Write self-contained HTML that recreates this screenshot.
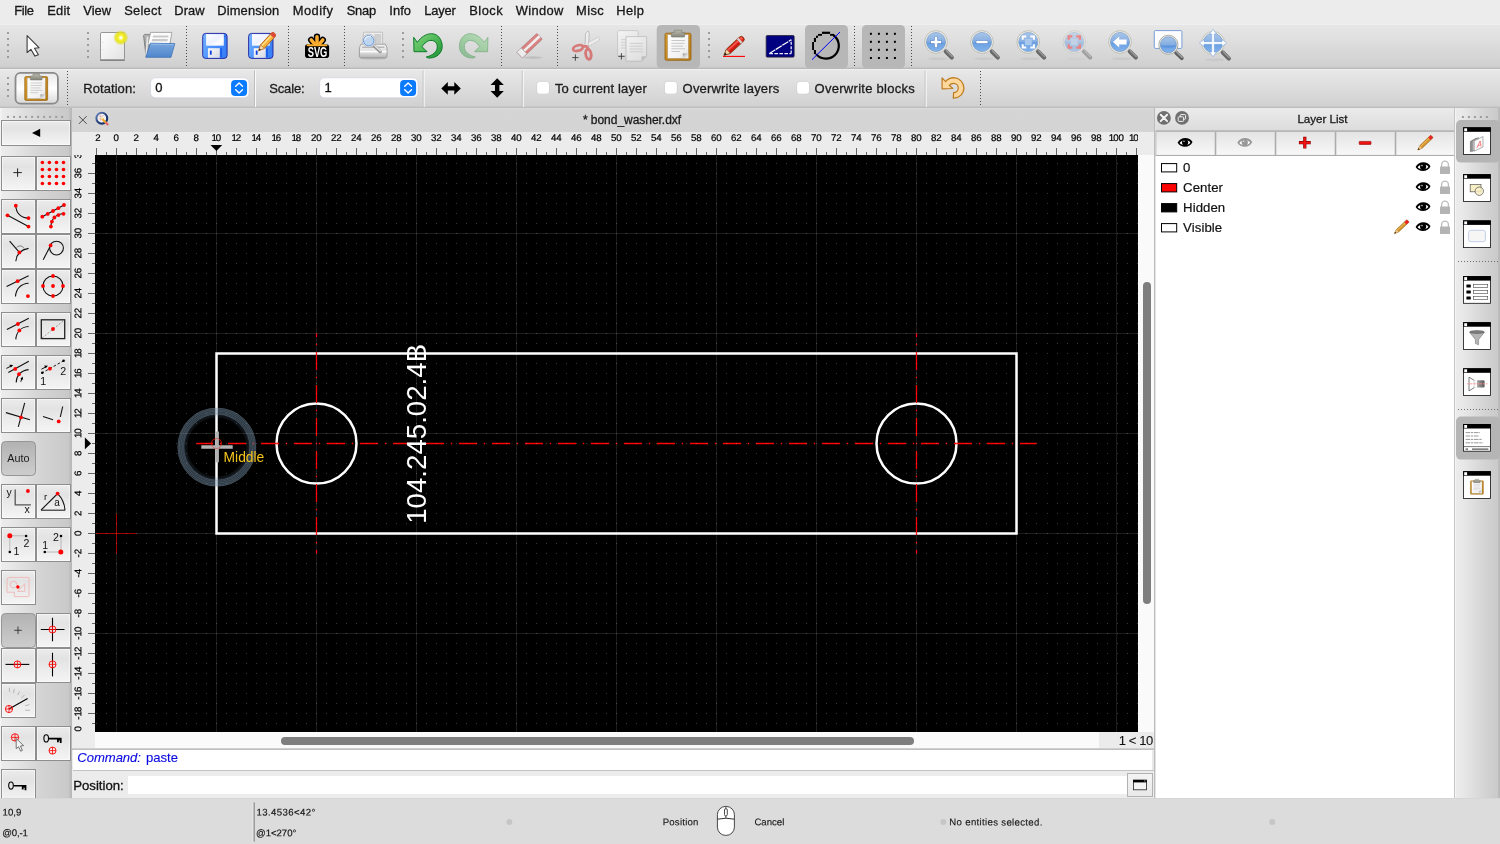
<!DOCTYPE html>
<html lang="en"><head><meta charset="utf-8"><title>bond_washer.dxf</title>
<style>
html,body{margin:0;padding:0}
body{width:1500px;height:844px;position:relative;overflow:hidden;background:#ececec;font-family:"Liberation Sans",sans-serif;font-size:13px;color:#000;line-height:1}
#app{position:absolute;left:0;top:0;width:1500px;height:844px;overflow:hidden;will-change:transform}
.abs{position:absolute}
.abs svg{display:block}
svg{display:block;overflow:visible}
#menubar{left:0;top:0;width:1500px;height:24px;background:#ececec}
#toolbar{left:0;top:24px;width:1500px;height:44px;background:linear-gradient(#f4f4f4,#e6e6e6 1.5px,#e5e5e5 10%,#d0d0d0 96%,#c4c4c4);border-bottom:1px solid #b9b9b9}
#options{left:0;top:69px;width:1500px;height:39px;background:linear-gradient(#f4f4f4,#e8e8e8 1.5px,#e6e6e6 10%,#d1d1d1 95%,#bfbfbf 97.5%,#bcbcbc)}
#leftbar{left:0;top:108px;width:72px;height:690px;background:linear-gradient(90deg,#f6f6f6,#ececec 3%,#e8e8e8 15%,#d4d4d4 56%,#c9c9c9 95%,#bcbcbc 97.5%,#b6b6b6)}
#tabbar{left:72px;top:108px;width:1082px;height:24px;background:linear-gradient(#dedede,#d5d5d5 1.5px,#d4d4d4)}
#corner{left:72px;top:132px;width:23px;height:23px;background:#ececec}
#vscroll{left:1138px;top:155px;width:16px;height:577px;background:#fafafa}
#vscroll i{position:absolute;left:5px;top:127px;width:8px;height:322px;border-radius:4px;background:#7e7e7e}
#hscroll{left:95px;top:732px;width:1004px;height:16px;background:#fafafa}
#hscroll i{position:absolute;left:185.7px;top:5px;width:633.3px;height:8px;border-radius:4px;background:#7e7e7e}
#zoomlbl{left:1099px;top:732px;width:55px;height:16px;background:#ebebeb}
#cmdsep{left:72px;top:748px;width:1082px;height:2.3px;background:linear-gradient(#f0f0f0,#c9c9c9 30%,#bebebe 75%,#d6d6d6)}
#cmd{left:73px;top:750.3px;width:1081px;height:19.7px;background:#fff;border-bottom:1.2px solid #c2c2c2}
#posrow{left:72px;top:771.2px;width:1082px;height:26.8px;background:#ececec}
#posrow .inp{position:absolute;left:56px;top:4.8px;width:998.6px;height:18px;background:#fff}
#posrow .btn{position:absolute;left:1055.3px;top:1.5px;width:25.4px;height:24.6px;border:1px solid #b2b2b2;background:linear-gradient(#f4f4f4,#e9e9e9);box-sizing:border-box}
#status{left:0;top:797.6px;width:1500px;height:47px;background:linear-gradient(#d3d3d3,#dcdcdc 1.5px,#dcdcdc)}
#corner2{left:72px;top:732px;width:23px;height:16px;background:#ececec}
#corner3{left:1138px;top:132px;width:16px;height:23px;background:#ececec}

</style></head>
<body>
<div id="app">
<div id="menubar" class="abs">
</div>
<div id="toolbar" class="abs"></div>
<div id="options" class="abs"></div>
<div id="leftbar" class="abs"></div>
<div id="tabbar" class="abs"></div>
<div id="corner" class="abs"></div>
<div id="corner2" class="abs"></div>
<div id="corner3" class="abs"></div>
<div id="vscroll" class="abs"><i></i></div>
<div id="hscroll" class="abs"><i></i></div>
<div id="zoomlbl" class="abs"></div>
<div id="cmdsep" class="abs"></div>
<div id="cmd" class="abs"></div>
<div id="posrow" class="abs"><div class="inp"></div><div class="btn"></div></div>
<div id="status" class="abs"></div>
<svg id="tb" class="abs" style="left:0;top:0" width="1500" height="110" viewBox="0 0 1500 110">
<defs>
<linearGradient id="gbtn" x1="0" y1="0" x2="0" y2="1"><stop offset="0" stop-color="#e9e9e9"/><stop offset="0.5" stop-color="#ffffff"/><stop offset="1" stop-color="#d9d9d9"/></linearGradient>
<linearGradient id="gpage" x1="0" y1="0" x2="1" y2="1"><stop offset="0" stop-color="#ffffff"/><stop offset="1" stop-color="#e2e2e2"/></linearGradient>
<radialGradient id="gglow"><stop offset="0" stop-color="#ffffff"/><stop offset="0.12" stop-color="#fffff0"/><stop offset="0.34" stop-color="#f6f22a"/><stop offset="0.62" stop-color="#e8e41c" stop-opacity="0.95"/><stop offset="0.82" stop-color="#e2de20" stop-opacity="0.55"/><stop offset="1" stop-color="#dcd820" stop-opacity="0"/></radialGradient>
<linearGradient id="gfold" x1="0" y1="0" x2="0" y2="1"><stop offset="0" stop-color="#7aa7de"/><stop offset="1" stop-color="#4f86cc"/></linearGradient>
<linearGradient id="gflop" x1="0" y1="0" x2="1" y2="0.3"><stop offset="0" stop-color="#7ab6ff"/><stop offset="0.45" stop-color="#4d94ff"/><stop offset="1" stop-color="#3a82f6"/></linearGradient><linearGradient id="gshut" x1="0" y1="0" x2="1" y2="1"><stop offset="0" stop-color="#fafafc"/><stop offset="1" stop-color="#d6d6e2"/></linearGradient>
<linearGradient id="glabel" x1="0" y1="0" x2="1" y2="1"><stop offset="0" stop-color="#ffffff"/><stop offset="0.5" stop-color="#eef1ff"/><stop offset="0.75" stop-color="#ffffff"/><stop offset="1" stop-color="#e6ebff"/></linearGradient>
<linearGradient id="ggreen" x1="0" y1="0" x2="1" y2="1"><stop offset="0" stop-color="#86d47e"/><stop offset="0.5" stop-color="#4db856"/><stop offset="1" stop-color="#1f9136"/></linearGradient>
<linearGradient id="glens" x1="0" y1="0" x2="0" y2="1"><stop offset="0" stop-color="#a9c6ea"/><stop offset="0.48" stop-color="#86aee2"/><stop offset="0.52" stop-color="#6a9fe0"/><stop offset="1" stop-color="#82b3ec"/></linearGradient>
<linearGradient id="gclip" x1="0" y1="0" x2="0" y2="1"><stop offset="0" stop-color="#b9b9ad"/><stop offset="1" stop-color="#85857a"/></linearGradient>
<linearGradient id="gprn" x1="0" y1="0" x2="0" y2="1"><stop offset="0" stop-color="#f2f2f2"/><stop offset="0.6" stop-color="#dcdcdc"/><stop offset="1" stop-color="#b4b4b4"/></linearGradient>
<linearGradient id="gboard" x1="0" y1="0" x2="1" y2="1"><stop offset="0" stop-color="#d69a2e"/><stop offset="1" stop-color="#b97c16"/></linearGradient><linearGradient id="gpaper" x1="0" y1="0" x2="1" y2="1"><stop offset="0" stop-color="#ffffff"/><stop offset="0.7" stop-color="#f2f2f2"/><stop offset="1" stop-color="#e2e2e2"/></linearGradient><linearGradient id="gfoldc" x1="0" y1="0" x2="1" y2="1"><stop offset="0" stop-color="#8f8f8f"/><stop offset="0.5" stop-color="#d9d9d9"/><stop offset="1" stop-color="#f4f4f4"/></linearGradient>
<linearGradient id="gback" x1="0" y1="0" x2="0" y2="1"><stop offset="0" stop-color="#b4b4b4"/><stop offset="1" stop-color="#808080"/></linearGradient>
</defs>
<rect x="7" y="32" width="2" height="2" fill="#9c9c9c"/><rect x="7" y="38" width="2" height="2" fill="#9c9c9c"/><rect x="7" y="44" width="2" height="2" fill="#9c9c9c"/><rect x="7" y="50" width="2" height="2" fill="#9c9c9c"/><rect x="7" y="56" width="2" height="2" fill="#9c9c9c"/>
<rect x="87" y="32" width="2" height="2" fill="#9c9c9c"/><rect x="87" y="38" width="2" height="2" fill="#9c9c9c"/><rect x="87" y="44" width="2" height="2" fill="#9c9c9c"/><rect x="87" y="50" width="2" height="2" fill="#9c9c9c"/><rect x="87" y="56" width="2" height="2" fill="#9c9c9c"/>
<rect x="402" y="32" width="2" height="2" fill="#9c9c9c"/><rect x="402" y="38" width="2" height="2" fill="#9c9c9c"/><rect x="402" y="44" width="2" height="2" fill="#9c9c9c"/><rect x="402" y="50" width="2" height="2" fill="#9c9c9c"/><rect x="402" y="56" width="2" height="2" fill="#9c9c9c"/>
<rect x="708" y="32" width="2" height="2" fill="#9c9c9c"/><rect x="708" y="38" width="2" height="2" fill="#9c9c9c"/><rect x="708" y="44" width="2" height="2" fill="#9c9c9c"/><rect x="708" y="50" width="2" height="2" fill="#9c9c9c"/><rect x="708" y="56" width="2" height="2" fill="#9c9c9c"/>
<path d="M186.5 26V67" stroke="#4c4c4c" stroke-width="1" stroke-dasharray="1 2" fill="none"/>
<path d="M288.5 26V67" stroke="#4c4c4c" stroke-width="1" stroke-dasharray="1 2" fill="none"/>
<path d="M344.5 26V67" stroke="#4c4c4c" stroke-width="1" stroke-dasharray="1 2" fill="none"/>
<path d="M501.5 26V67" stroke="#4c4c4c" stroke-width="1" stroke-dasharray="1 2" fill="none"/>
<path d="M557.5 26V67" stroke="#4c4c4c" stroke-width="1" stroke-dasharray="1 2" fill="none"/>
<path d="M854.5 26V67" stroke="#4c4c4c" stroke-width="1" stroke-dasharray="1 2" fill="none"/>
<path d="M911.5 26V67" stroke="#4c4c4c" stroke-width="1" stroke-dasharray="1 2" fill="none"/>
<rect x="656.7" y="25" width="43.299999999999955" height="43.3" rx="4.5" fill="#b7b7b7"/>
<rect x="805" y="25" width="43" height="43.3" rx="4.5" fill="#b7b7b7"/>
<rect x="862" y="25" width="43" height="43.3" rx="4.5" fill="#b7b7b7"/>
<path d="M27.1 35.6V52.5L30.9 49.3L34.9 56.1L38.4 54.8L34.5 48.2L39 47.7Z" fill="#fff" stroke="#3c3c3c" stroke-width="1.1" stroke-linejoin="round"/>
<rect x="100.5" y="32.5" width="24" height="27.4" rx="1.4" fill="url(#gpage)" stroke="#8c8c8c" stroke-width="0.9"/><path d="M100.4 60.2H124.6" stroke="#6f6f6f" stroke-width="1" stroke-linecap="round"/><path d="M102.2 42.4h1M102.2 49.6h1" stroke="#cfcfcf" stroke-width="0.8"/><circle cx="120.8" cy="37.7" r="7.6" fill="url(#gglow)"/>
<path d="M143.5 35.4l1.2 -1h5.6l1 1.4h18.4v20.8h-23.6z" fill="url(#gback)" stroke="#6a6a6a" stroke-width="0.7"/><path d="M150.6 32.4h21.2l-2 12.4h-22z" fill="#fbfbfb" stroke="#8a8a8a" stroke-width="0.7"/><path d="M153 35.4h15.6l-0.4 2.2h-15.6zM152.2 39h15.6l-0.4 2.2h-15.6z" fill="#bdbdbd" opacity="0.8"/><path d="M147.6 36.6l-1.4 19" stroke="#e4e4e4" stroke-width="1.8"/><path d="M150.4 43.2l24.4 0.4l-3.8 13.7h-25.2z" fill="url(#gfold)" stroke="#3f74b8" stroke-width="0.8" stroke-linejoin="round"/><path d="M151 44.2l22.6 0.4" stroke="#9cc0ea" stroke-width="0.8"/>
<g transform="translate(202.3 0)"><rect x="0.4" y="33.4" width="24.4" height="25" rx="3" fill="url(#gflop)" stroke="#1e1e9e" stroke-width="0.9"/><rect x="3.8" y="34.1" width="17.7" height="11.6" fill="url(#glabel)"/><rect x="5.6" y="48.2" width="11.9" height="9.6" fill="url(#gshut)"/><rect x="17.9" y="48.2" width="1.7" height="8.8" fill="#1c5ce6"/><rect x="7.6" y="50.6" width="1.8" height="4.2" rx="0.6" fill="#1040e0"/><rect x="22.2" y="35.8" width="1.2" height="1" fill="#2a4aa0"/></g>
<g transform="translate(248.2 0)"><rect x="0.4" y="33.4" width="24.4" height="25" rx="3" fill="url(#gflop)" stroke="#1e1e9e" stroke-width="0.9"/><rect x="3.8" y="34.1" width="17.7" height="11.6" fill="url(#glabel)"/><rect x="5.6" y="48.2" width="11.9" height="9.6" fill="url(#gshut)"/><rect x="17.9" y="48.2" width="1.7" height="8.8" fill="#1c5ce6"/><rect x="7.6" y="50.6" width="1.8" height="4.2" rx="0.6" fill="#1040e0"/><rect x="22.2" y="35.8" width="1.2" height="1" fill="#2a4aa0"/></g>
<g transform="translate(258.7 50.7) rotate(-47.5)"><path d="M0 0L5.5 -2.6H21.5Q23.6 -2.6 23.6 0Q23.6 2.6 21.5 2.6H5.5Z" fill="#f7b23c" stroke="#a85a14" stroke-width="0.8" stroke-linejoin="round"/><path d="M5.5 -0.9H20.5" stroke="#fde08a" stroke-width="1.3"/><path d="M19.6 -2.6H22Q23.6 -2.4 23.6 0Q23.6 2.4 22 2.6H19.6Z" fill="#e0483a"/><path d="M0 0L5.5 -2.6V2.6Z" fill="#f3d9b0" stroke="#a85a14" stroke-width="0.5"/><path d="M0 0L2.2 -1V1Z" fill="#222"/></g>
<g><g stroke="#000" stroke-width="6.4" stroke-linecap="round"><path d="M317 47L317 36.7"/><path d="M317 47L311.2 39.9"/><path d="M317 47L322.8 39.9"/></g><g stroke="#fbad30" stroke-width="3.5" stroke-linecap="round"><path d="M317 47L317 36.7"/><path d="M317 47L311.2 39.9"/><path d="M317 47L322.8 39.9"/></g><rect x="305" y="44.2" width="24.1" height="13.9" rx="2.8" fill="#000"/><path d="M307.6 45.3H326.4" stroke="#fbad30" stroke-width="2" stroke-linecap="round"/><path d="M313.4 44.6H320.6" stroke="#fbad30" stroke-width="2.6"/><text x="317.5" y="57.1" text-anchor="middle" font-family="Liberation Sans, sans-serif" font-weight="bold" font-size="14" fill="#fff" textLength="19.6" lengthAdjust="spacingAndGlyphs">SVG</text></g>
<rect x="363.4" y="32.2" width="19.2" height="13" rx="0.8" fill="#ececec" stroke="#b0b0b0" stroke-width="0.7"/><rect x="374.4" y="34" width="6.8" height="9.4" fill="#cfcfcf"/><ellipse cx="373.2" cy="58.4" rx="13" ry="1.2" fill="#000" opacity="0.13"/><path d="M361 44.2h24.4l1.6 3.4v8.8q0 1.4 -1.4 1.4h-24.8q-1.4 0 -1.4 -1.4v-8.8z" fill="url(#gprn)" stroke="#909090" stroke-width="0.8"/><path d="M362 47.2h22.4" stroke="#9a9a9a" stroke-width="0.9"/><path d="M360 51.6h26.6" stroke="#fdfdfd" stroke-width="1.6"/><path d="M373.6 45.4l6.6 6.2" stroke="#8f8f8f" stroke-width="3.2" stroke-linecap="round"/><path d="M374 45l6.4 6" stroke="#e2e2e2" stroke-width="1.5" stroke-linecap="round"/><circle cx="368.7" cy="40.7" r="6.5" fill="#f1f1f1" stroke="#ababab" stroke-width="0.6"/><circle cx="368.7" cy="40.7" r="5.2" fill="#bed5ef" stroke="#5b8fd8" stroke-width="0.9"/><path d="M365 39.6a4 4 0 0 1 5.4 -3" stroke="#e6f0fb" stroke-width="1.3" fill="none" stroke-linecap="round"/>
<g transform="translate(678 45.7) scale(1.0) translate(-678 -45.7)"><rect x="665" y="33.2" width="26" height="27.1" rx="1.5" fill="url(#gboard)" stroke="#94610f" stroke-width="0.8"/><rect x="667.8" y="34.8" width="20.4" height="23.4" fill="url(#gpaper)" stroke="#a9a9a9" stroke-width="0.4"/><path d="M688.2 53.4v4.8h-5.4v-4.8z" fill="url(#gfoldc)"/><path d="M671.4 40.5h13.6M671.4 43.3h13M671.4 46.1h11.6M671.4 48.8h13.6M671.4 51.5h8.6" stroke="#c2c2c2" stroke-width="0.9"/><path d="M674.3 30.2h7.4v2.2h2.6q0.4 0 0.4 0.5v3.6q0 0.6 -0.6 0.6h-12.2q-0.6 0 -0.6 -0.6v-3.6q0 -0.5 0.4 -0.5h2.6z" fill="url(#gclip)" stroke="#6f6f64" stroke-width="0.5"/></g>
<path d="M413.7 37.3L414 51.7L427 51.7L422 46.7C424.5 43 427.5 40.4 431 40.4C435 40.4 437.4 43.4 437.3 47C437.2 51.6 433 55.4 426.3 57C427.3 57.8 428.3 58.1 429.6 58.1C437.5 57.6 442.2 52.6 442.2 46.4C442.2 39.4 437.8 33.7 431.6 33.7C426 33.7 421 37.2 417.3 42.3Z" fill="url(#ggreen)" stroke="#0d7a2a" stroke-width="1" stroke-linejoin="round"/>
<g transform="translate(901.6 0) scale(-1 1)" opacity="0.42"><path d="M413.7 37.3L414 51.7L427 51.7L422 46.7C424.5 43 427.5 40.4 431 40.4C435 40.4 437.4 43.4 437.3 47C437.2 51.6 433 55.4 426.3 57C427.3 57.8 428.3 58.1 429.6 58.1C437.5 57.6 442.2 52.6 442.2 46.4C442.2 39.4 437.8 33.7 431.6 33.7C426 33.7 421 37.2 417.3 42.3Z" fill="url(#ggreen)" stroke="#0f7a1a" stroke-width="0.9" stroke-linejoin="round"/></g>
<g opacity="0.55"><ellipse cx="533" cy="57.6" rx="9.5" ry="1.3" fill="#000" opacity="0.18"/><g transform="translate(520.7 54) rotate(-43.2)"><rect x="-1.5" y="-4" width="27.4" height="8" rx="0.8" fill="#d83a3a" stroke="#8e2020" stroke-width="0.7"/><rect x="4.6" y="-1.3" width="21.3" height="2.6" fill="#fff"/><rect x="-1.5" y="-4" width="6" height="8" fill="#fff" stroke="#8a8a8a" stroke-width="0.6"/></g></g>
<g opacity="0.6"><path d="M585 46.6L585.6 33.2L588 30.8L589.2 33.2L588.6 46.8Z" fill="#f6f6f6" stroke="#777" stroke-width="0.6"/><path d="M588 42.6L598.6 37L599.8 38L599.4 40.4L588.6 46.4Z" fill="#f6f6f6" stroke="#888" stroke-width="0.6" stroke-dasharray="1.6 0.8"/><path d="M582.6 46.4L586.6 46.2L588.6 49.6" stroke="#d63c3c" stroke-width="2.6" fill="none" stroke-linejoin="round"/><ellipse cx="578" cy="48.1" rx="5" ry="2.7" transform="rotate(-17 578 48.1)" fill="none" stroke="#d63c3c" stroke-width="2.8"/><ellipse cx="588.4" cy="54.2" rx="2.7" ry="5.2" transform="rotate(-9 588.4 54.2)" fill="none" stroke="#d63c3c" stroke-width="2.8"/></g><path d="M572.2 57.6h6.4M575.4 54.4v6.4" stroke="#333" stroke-width="0.85"/>
<g opacity="0.6"><rect x="617.6" y="30.6" width="20.6" height="25.4" rx="1.2" fill="url(#gpage)" stroke="#a6a6a6" stroke-width="0.7"/><path d="M621 39.6h10M621 42.4h10M621 45.2h10M621 48h10" stroke="#c4c4c4" stroke-width="0.9"/><path d="M626 36.6h20.6v19.6l-5 5h-15.6z" fill="url(#gpage)" stroke="#9c9c9c" stroke-width="0.7"/><path d="M646.6 56.2l-5 5v-5z" fill="#b0b0b0"/><path d="M629.6 43.4h13.4M629.6 46.2h13.4M629.6 49h13.4M629.6 51.8h13.4" stroke="#c0c0c0" stroke-width="0.9"/></g><path d="M618.2 56.3h6.4M621.4 53.1v6.4" stroke="#333" stroke-width="0.85"/>
<path d="M723 56.4H745" stroke="#ff0000" stroke-width="1.1"/><g transform="translate(724 55.3) rotate(-42.6)"><path d="M0 0L6 -2.9H23.4Q26.4 -2.9 26.4 0Q26.4 2.9 23.4 2.9H6Z" fill="#e2231a" stroke="#7a3a10" stroke-width="0.8" stroke-linejoin="round"/><path d="M6 -1.1H20" stroke="#f2685e" stroke-width="1.2"/><path d="M6 1.6H20" stroke="#b81a12" stroke-width="1"/><path d="M20.2 -2.9H22.6V2.9H20.2Z" fill="#d6d6d6" opacity="0.95"/><circle cx="24.2" cy="-0.8" r="1.1" fill="#ff8a7a" opacity="0.8"/><path d="M0 0L6 -2.9V2.9Z" fill="#f0d5a8" stroke="#7a3a10" stroke-width="0.5"/><path d="M0 0L2.6 -1.25V1.25Z" fill="#111"/></g>
<rect x="766.2" y="35.6" width="27.9" height="21.5" rx="1" fill="#000080" stroke="#26263e" stroke-width="0.9"/><path d="M769.4 53.4L791.2 39.8" stroke="#fff" stroke-width="1.2" stroke-dasharray="7 0.6"/><path d="M769.4 53.7H791.2" stroke="#e8e8f4" stroke-width="1.3" stroke-dasharray="3.6 1.4"/><path d="M791.2 53.6V39.8" stroke="#e8e8f4" stroke-width="1.3" stroke-dasharray="3 1.4"/>
<rect x="822" y="31.7" width="8.1" height="2.2" fill="#000"/><rect x="830.1" y="33.9" width="4" height="1.9" fill="#000"/><rect x="818" y="33.9" width="4" height="1.9" fill="#000"/><rect x="816" y="35.7" width="2" height="2.2" fill="#000"/><rect x="813.9" y="37.9" width="2.1" height="4.1" fill="#000"/><rect x="812.1" y="42" width="1.9" height="8" fill="#000"/><rect x="813.9" y="50" width="2.1" height="4.1" fill="#000"/><path d="M833.4 35.23A12.9 12.9 0 1 1 816.1 54.1" fill="none" stroke="#000" stroke-width="2.2"/><path d="M812 59.7L840 32" stroke="#0000ff" stroke-width="1"/>
<rect x="869.9" y="32.8" width="2" height="2" fill="#000"/><rect x="869.9" y="40.8" width="2" height="2" fill="#000"/><rect x="869.9" y="48.8" width="2" height="2" fill="#000"/><rect x="869.9" y="57.0" width="2" height="2" fill="#000"/><rect x="877.9" y="32.8" width="2" height="2" fill="#000"/><rect x="877.9" y="40.8" width="2" height="2" fill="#000"/><rect x="877.9" y="48.8" width="2" height="2" fill="#000"/><rect x="877.9" y="57.0" width="2" height="2" fill="#000"/><rect x="885.9" y="32.8" width="2" height="2" fill="#000"/><rect x="885.9" y="40.8" width="2" height="2" fill="#000"/><rect x="885.9" y="48.8" width="2" height="2" fill="#000"/><rect x="885.9" y="57.0" width="2" height="2" fill="#000"/><rect x="893.9" y="32.8" width="2" height="2" fill="#000"/><rect x="893.9" y="40.8" width="2" height="2" fill="#000"/><rect x="893.9" y="48.8" width="2" height="2" fill="#000"/><rect x="893.9" y="57.0" width="2" height="2" fill="#000"/>
<g><ellipse cx="938" cy="58.8" rx="10" ry="1.4" fill="#000" opacity="0.05"/><path d="M945.8 51.4L951.8 57.4" stroke="#6a6a6a" stroke-width="4.2" stroke-linecap="round"/><path d="M946.4 50.8L952.2 56.6" stroke="#9c9c9c" stroke-width="1.3" stroke-linecap="round"/><circle cx="936" cy="42" r="11.299999999999999" fill="#f1f1ea" stroke="#adada4" stroke-width="0.7"/><circle cx="936" cy="42" r="9.6" fill="url(#glens)" stroke="#7f9cc4" stroke-width="0.7"/><path d="M930.4 42h11.2M936 36.4v11.2" stroke="#4a78bc" stroke-width="3.6" /><path d="M930.8 42h10.4M936 36.8v10.4" stroke="#fff" stroke-width="2.6" /></g><g><ellipse cx="984" cy="58.8" rx="10" ry="1.4" fill="#000" opacity="0.05"/><path d="M991.8 51.4L997.8 57.4" stroke="#6a6a6a" stroke-width="4.2" stroke-linecap="round"/><path d="M992.4 50.8L998.2 56.6" stroke="#9c9c9c" stroke-width="1.3" stroke-linecap="round"/><circle cx="982" cy="42" r="11.299999999999999" fill="#f1f1ea" stroke="#adada4" stroke-width="0.7"/><circle cx="982" cy="42" r="9.6" fill="url(#glens)" stroke="#7f9cc4" stroke-width="0.7"/><path d="M975.8 42h12.4" stroke="#4a78bc" stroke-width="3.6"/><path d="M976.3 42h11.4" stroke="#fff" stroke-width="2.6"/></g><g><ellipse cx="1030.3" cy="58.8" rx="10" ry="1.4" fill="#000" opacity="0.05"/><path d="M1038.1 51.4L1044.1 57.4" stroke="#6a6a6a" stroke-width="4.2" stroke-linecap="round"/><path d="M1038.7 50.8L1044.5 56.6" stroke="#9c9c9c" stroke-width="1.3" stroke-linecap="round"/><circle cx="1028.3" cy="42" r="11.299999999999999" fill="#f1f1ea" stroke="#adada4" stroke-width="0.7"/><circle cx="1028.3" cy="42" r="9.6" fill="url(#glens)" stroke="#7f9cc4" stroke-width="0.7"/><rect x="1024.8999999999999" y="38.8" width="6.8" height="6.4" fill="#a9c8ee"/><path d="M1022.6999999999999 39.8v-3.4h3.6M1033.8999999999999 39.8v-3.4h-3.6M1022.6999999999999 44.2v3.4h3.6M1033.8999999999999 44.2v3.4h-3.6" stroke="#fff" stroke-width="2" fill="none"/></g><g opacity="0.5"><ellipse cx="1076.3" cy="58.8" rx="10" ry="1.4" fill="#000" opacity="0.05"/><path d="M1084.1 51.4L1090.1 57.4" stroke="#6a6a6a" stroke-width="4.2" stroke-linecap="round"/><path d="M1084.7 50.8L1090.5 56.6" stroke="#9c9c9c" stroke-width="1.3" stroke-linecap="round"/><circle cx="1074.3" cy="42" r="11.299999999999999" fill="#f1f1ea" stroke="#adada4" stroke-width="0.7"/><circle cx="1074.3" cy="42" r="9.6" fill="url(#glens)" stroke="#7f9cc4" stroke-width="0.7"/><rect x="1070.8999999999999" y="38.8" width="6.8" height="6.4" fill="#a9c8ee"/><path d="M1068.7 39.8v-3.4h3.6M1079.8999999999999 39.8v-3.4h-3.6M1068.7 44.2v3.4h3.6M1079.8999999999999 44.2v3.4h-3.6" stroke="#ff2a2a" stroke-width="2.2" fill="none"/></g><g><ellipse cx="1122" cy="58.8" rx="10" ry="1.4" fill="#000" opacity="0.05"/><path d="M1129.8 51.4L1135.8 57.4" stroke="#6a6a6a" stroke-width="4.2" stroke-linecap="round"/><path d="M1130.4 50.8L1136.2 56.6" stroke="#9c9c9c" stroke-width="1.3" stroke-linecap="round"/><circle cx="1120" cy="42" r="11.299999999999999" fill="#f1f1ea" stroke="#adada4" stroke-width="0.7"/><circle cx="1120" cy="42" r="9.6" fill="url(#glens)" stroke="#7f9cc4" stroke-width="0.7"/><path d="M1113 42l6.2 -5.4v3h7.4v4.8h-7.4v3z" fill="#fff"/></g><rect x="1154.3" y="30.6" width="27.6" height="17.8" rx="1" fill="#fdfdfd" stroke="#6b93d6" stroke-width="0.9"/><path d="M1176.0 52.599999999999994L1181.8000000000002 58.199999999999996" stroke="#5c5c5c" stroke-width="3.8" stroke-linecap="round"/><path d="M1176.4 51.8L1182.2 57.4" stroke="#a4a4a4" stroke-width="1.4" stroke-linecap="round"/><circle cx="1168.4" cy="44.8" r="9.6" fill="#ecece4" stroke="#a7a79f" stroke-width="0.9"/><circle cx="1168.4" cy="44.8" r="8" fill="url(#glens)" stroke="#5b86c2" stroke-width="0.6"/><path d="M1160.8000000000002 46.0a9 4 0 0 0 15.2 0" fill="#4f88d8" opacity="0.55"/><g><ellipse cx="1215" cy="59.8" rx="10" ry="1.4" fill="#000" opacity="0.05"/><path d="M1222.8 52.4L1228.8 58.4" stroke="#6a6a6a" stroke-width="4.2" stroke-linecap="round"/><path d="M1223.4 51.8L1229.2 57.6" stroke="#9c9c9c" stroke-width="1.3" stroke-linecap="round"/><circle cx="1213" cy="43" r="11.5" fill="#f1f1ea" stroke="#adada4" stroke-width="0.7"/><circle cx="1213" cy="43" r="9.8" fill="url(#glens)" stroke="#7f9cc4" stroke-width="0.7"/><path d="M1213 29.4l3.4 4.6h-2.1v7.7h7.7v-2.1l4.6 3.4l-4.6 3.4v-2.1h-7.7v7.7h2.1l-3.4 4.6l-3.4 -4.6h2.1v-7.7h-7.7v2.1l-4.6 -3.4l4.6 -3.4v2.1h7.7v-7.7h-2.1z" fill="#fff" stroke="#6d9be0" stroke-width="0.5"/></g>
<rect x="7" y="77" width="2" height="2" fill="#9c9c9c"/><rect x="7" y="83" width="2" height="2" fill="#9c9c9c"/><rect x="7" y="89" width="2" height="2" fill="#9c9c9c"/><rect x="7" y="95" width="2" height="2" fill="#9c9c9c"/>
<path d="M67.5 71V106" stroke="#4c4c4c" stroke-width="1" stroke-dasharray="1 2" fill="none"/>
<path d="M980.5 71V106" stroke="#4c4c4c" stroke-width="1" stroke-dasharray="1 2" fill="none"/>
<path d="M254.5 70.5V107" stroke="#bdbdbd" stroke-width="1"/><path d="M255.5 70.5V107" stroke="#fafafa" stroke-width="1"/>
<path d="M423.2 70.5V107" stroke="#bdbdbd" stroke-width="1"/><path d="M424.2 70.5V107" stroke="#fafafa" stroke-width="1"/>
<path d="M522.3 70.5V107" stroke="#bdbdbd" stroke-width="1"/><path d="M523.3 70.5V107" stroke="#fafafa" stroke-width="1"/>
<path d="M925.2 70.5V107" stroke="#bdbdbd" stroke-width="1"/><path d="M926.2 70.5V107" stroke="#fafafa" stroke-width="1"/>
<rect x="15.5" y="72.9" width="42.4" height="30.8" rx="5" fill="url(#gbtn)" stroke="#8a8a8a" stroke-width="1.8"/>
<g transform="translate(36.2 87.6) scale(0.88) translate(-678 -45.7)"><rect x="665" y="33.2" width="26" height="27.1" rx="1.5" fill="url(#gboard)" stroke="#94610f" stroke-width="0.8"/><rect x="667.8" y="34.8" width="20.4" height="23.4" fill="url(#gpaper)" stroke="#a9a9a9" stroke-width="0.4"/><path d="M688.2 53.4v4.8h-5.4v-4.8z" fill="url(#gfoldc)"/><path d="M671.4 40.5h13.6M671.4 43.3h13M671.4 46.1h11.6M671.4 48.8h13.6M671.4 51.5h8.6" stroke="#c2c2c2" stroke-width="0.9"/><path d="M674.3 30.2h7.4v2.2h2.6q0.4 0 0.4 0.5v3.6q0 0.6 -0.6 0.6h-12.2q-0.6 0 -0.6 -0.6v-3.6q0 -0.5 0.4 -0.5h2.6z" fill="url(#gclip)" stroke="#6f6f64" stroke-width="0.5"/></g>
<rect x="150.6" y="77.8" width="98.4" height="20" rx="5" fill="#fff" stroke="#c9cfdb" stroke-width="0.6"/>
<rect x="231.1" y="80" width="16" height="15.9" rx="4" fill="#0a7aff"/>
<path d="M235.7 86.2l3.4 -3.2l3.4 3.2M235.7 89.8l3.4 3.2l3.4 -3.2" stroke="#fff" stroke-width="1.4" fill="none" stroke-linecap="round" stroke-linejoin="round"/>
<rect x="319.6" y="77.8" width="98.39999999999998" height="20" rx="5" fill="#fff" stroke="#c9cfdb" stroke-width="0.6"/>
<rect x="400.1" y="80" width="16" height="15.9" rx="4" fill="#0a7aff"/>
<path d="M404.70000000000005 86.2l3.4 -3.2l3.4 3.2M404.70000000000005 89.8l3.4 3.2l3.4 -3.2" stroke="#fff" stroke-width="1.4" fill="none" stroke-linecap="round" stroke-linejoin="round"/>
<rect x="536.6" y="81.3" width="12.9" height="12.9" rx="3.2" fill="#fff" stroke="#cdcdcd" stroke-width="0.8"/>
<rect x="664.4" y="81.3" width="12.9" height="12.9" rx="3.2" fill="#fff" stroke="#cdcdcd" stroke-width="0.8"/>
<rect x="796.6" y="81.3" width="12.9" height="12.9" rx="3.2" fill="#fff" stroke="#cdcdcd" stroke-width="0.8"/>
<path d="M441.3 88.4l6.5 -6.3v4.2h6.5v-4.2l6.5 6.3l-6.5 6.3v-4.2h-6.5v4.2z" fill="#000"/>
<path d="M497.2 78.2l6.6 6.7h-4.4v6.2h4.4l-6.6 6.7l-6.6 -6.7h4.4v-6.2h-4.4z" fill="#000"/>
<path d="M942.1 77.9L942.1 88.8L952.8 88.5L949.3 85.3C950.2 84.2 951.8 83.4 953.6 83.4A4.65 4.65 0 0 1 958.25 88.05A4.65 4.65 0 0 1 953.6 92.7L953.3 98.2A10.3 10.3 0 0 0 963.9 88A10.3 10.3 0 0 0 953.9 77.7C950.6 77.7 947.6 79.2 945.6 81.6Z" fill="#fdd79c" stroke="#be7a1c" stroke-width="1.2" stroke-linejoin="round"/>
</svg>
<svg id="lt" class="abs" style="left:0;top:108px;overflow:hidden" width="72" height="690" viewBox="0 108 72 690">
<defs><linearGradient id="lbn" x1="0" y1="0" x2="0" y2="1"><stop offset="0" stop-color="#ececec"/><stop offset="0.3" stop-color="#e3e3e3"/><stop offset="0.42" stop-color="#e6e6e6"/><stop offset="1" stop-color="#f5f5f5"/></linearGradient><linearGradient id="lbp" x1="0" y1="0" x2="0" y2="1"><stop offset="0" stop-color="#b2b2b2"/><stop offset="1" stop-color="#cdcdcd"/></linearGradient></defs>
<rect x="7.00" y="115.9" width="2" height="2" fill="#9c9c9c"/>
<rect x="13.02" y="115.9" width="2" height="2" fill="#9c9c9c"/>
<rect x="19.04" y="115.9" width="2" height="2" fill="#9c9c9c"/>
<rect x="25.06" y="115.9" width="2" height="2" fill="#9c9c9c"/>
<rect x="31.08" y="115.9" width="2" height="2" fill="#9c9c9c"/>
<rect x="37.10" y="115.9" width="2" height="2" fill="#9c9c9c"/>
<rect x="43.12" y="115.9" width="2" height="2" fill="#9c9c9c"/>
<rect x="49.14" y="115.9" width="2" height="2" fill="#9c9c9c"/>
<rect x="55.16" y="115.9" width="2" height="2" fill="#9c9c9c"/>
<rect x="61.18" y="115.9" width="2" height="2" fill="#9c9c9c"/>
<rect x="1.50" y="120.50" width="69.00" height="25.00" fill="url(#lbn)" stroke="#8e8e8e" stroke-width="1"/><rect x="2.50" y="121.50" width="67.00" height="23.00" fill="none" stroke="#fff" stroke-opacity="0.5" stroke-width="1"/>
<path d="M32 132.9L40.2 128.8V137Z" fill="#000"/>
<rect x="1.50" y="156.50" width="34.00" height="34.00" fill="url(#lbn)" stroke="#8e8e8e" stroke-width="1"/><rect x="2.50" y="157.50" width="32.00" height="32.00" fill="none" stroke="#fff" stroke-opacity="0.5" stroke-width="1"/>
<rect x="36.50" y="156.50" width="34.00" height="34.00" fill="url(#lbn)" stroke="#8e8e8e" stroke-width="1"/><rect x="37.50" y="157.50" width="32.00" height="32.00" fill="none" stroke="#fff" stroke-opacity="0.5" stroke-width="1"/>
<rect x="1.50" y="199.50" width="34.00" height="34.00" fill="url(#lbn)" stroke="#8e8e8e" stroke-width="1"/><rect x="2.50" y="200.50" width="32.00" height="32.00" fill="none" stroke="#fff" stroke-opacity="0.5" stroke-width="1"/>
<rect x="36.50" y="199.50" width="34.00" height="34.00" fill="url(#lbn)" stroke="#8e8e8e" stroke-width="1"/><rect x="37.50" y="200.50" width="32.00" height="32.00" fill="none" stroke="#fff" stroke-opacity="0.5" stroke-width="1"/>
<rect x="1.50" y="234.50" width="34.00" height="34.00" fill="url(#lbn)" stroke="#8e8e8e" stroke-width="1"/><rect x="2.50" y="235.50" width="32.00" height="32.00" fill="none" stroke="#fff" stroke-opacity="0.5" stroke-width="1"/>
<rect x="36.50" y="234.50" width="34.00" height="34.00" fill="url(#lbn)" stroke="#8e8e8e" stroke-width="1"/><rect x="37.50" y="235.50" width="32.00" height="32.00" fill="none" stroke="#fff" stroke-opacity="0.5" stroke-width="1"/>
<rect x="1.50" y="269.50" width="34.00" height="34.00" fill="url(#lbn)" stroke="#8e8e8e" stroke-width="1"/><rect x="2.50" y="270.50" width="32.00" height="32.00" fill="none" stroke="#fff" stroke-opacity="0.5" stroke-width="1"/>
<rect x="36.50" y="269.50" width="34.00" height="34.00" fill="url(#lbn)" stroke="#8e8e8e" stroke-width="1"/><rect x="37.50" y="270.50" width="32.00" height="32.00" fill="none" stroke="#fff" stroke-opacity="0.5" stroke-width="1"/>
<rect x="1.50" y="312.50" width="34.00" height="34.00" fill="url(#lbn)" stroke="#8e8e8e" stroke-width="1"/><rect x="2.50" y="313.50" width="32.00" height="32.00" fill="none" stroke="#fff" stroke-opacity="0.5" stroke-width="1"/>
<rect x="36.50" y="312.50" width="34.00" height="34.00" fill="url(#lbn)" stroke="#8e8e8e" stroke-width="1"/><rect x="37.50" y="313.50" width="32.00" height="32.00" fill="none" stroke="#fff" stroke-opacity="0.5" stroke-width="1"/>
<rect x="1.50" y="355.50" width="34.00" height="34.00" fill="url(#lbn)" stroke="#8e8e8e" stroke-width="1"/><rect x="2.50" y="356.50" width="32.00" height="32.00" fill="none" stroke="#fff" stroke-opacity="0.5" stroke-width="1"/>
<rect x="36.50" y="355.50" width="34.00" height="34.00" fill="url(#lbn)" stroke="#8e8e8e" stroke-width="1"/><rect x="37.50" y="356.50" width="32.00" height="32.00" fill="none" stroke="#fff" stroke-opacity="0.5" stroke-width="1"/>
<rect x="1.50" y="398.50" width="34.00" height="34.00" fill="url(#lbn)" stroke="#8e8e8e" stroke-width="1"/><rect x="2.50" y="399.50" width="32.00" height="32.00" fill="none" stroke="#fff" stroke-opacity="0.5" stroke-width="1"/>
<rect x="36.50" y="398.50" width="34.00" height="34.00" fill="url(#lbn)" stroke="#8e8e8e" stroke-width="1"/><rect x="37.50" y="399.50" width="32.00" height="32.00" fill="none" stroke="#fff" stroke-opacity="0.5" stroke-width="1"/>
<rect x="1.50" y="441.50" width="34.00" height="34.00" rx="4" fill="url(#lbp)" stroke="#969696" stroke-width="1"/>
<rect x="1.50" y="484.50" width="34.00" height="34.00" fill="url(#lbn)" stroke="#8e8e8e" stroke-width="1"/><rect x="2.50" y="485.50" width="32.00" height="32.00" fill="none" stroke="#fff" stroke-opacity="0.5" stroke-width="1"/>
<rect x="36.50" y="484.50" width="34.00" height="34.00" fill="url(#lbn)" stroke="#8e8e8e" stroke-width="1"/><rect x="37.50" y="485.50" width="32.00" height="32.00" fill="none" stroke="#fff" stroke-opacity="0.5" stroke-width="1"/>
<rect x="1.50" y="527.50" width="34.00" height="34.00" fill="url(#lbn)" stroke="#8e8e8e" stroke-width="1"/><rect x="2.50" y="528.50" width="32.00" height="32.00" fill="none" stroke="#fff" stroke-opacity="0.5" stroke-width="1"/>
<rect x="36.50" y="527.50" width="34.00" height="34.00" fill="url(#lbn)" stroke="#8e8e8e" stroke-width="1"/><rect x="37.50" y="528.50" width="32.00" height="32.00" fill="none" stroke="#fff" stroke-opacity="0.5" stroke-width="1"/>
<rect x="1.50" y="570.50" width="34.00" height="34.00" fill="url(#lbn)" stroke="#8e8e8e" stroke-width="1"/><rect x="2.50" y="571.50" width="32.00" height="32.00" fill="none" stroke="#fff" stroke-opacity="0.5" stroke-width="1"/>
<rect x="1.50" y="613.50" width="34.00" height="34.00" rx="4" fill="url(#lbp)" stroke="#969696" stroke-width="1"/>
<rect x="36.50" y="613.50" width="34.00" height="34.00" fill="url(#lbn)" stroke="#8e8e8e" stroke-width="1"/><rect x="37.50" y="614.50" width="32.00" height="32.00" fill="none" stroke="#fff" stroke-opacity="0.5" stroke-width="1"/>
<rect x="1.50" y="648.50" width="34.00" height="34.00" fill="url(#lbn)" stroke="#8e8e8e" stroke-width="1"/><rect x="2.50" y="649.50" width="32.00" height="32.00" fill="none" stroke="#fff" stroke-opacity="0.5" stroke-width="1"/>
<rect x="36.50" y="648.50" width="34.00" height="34.00" fill="url(#lbn)" stroke="#8e8e8e" stroke-width="1"/><rect x="37.50" y="649.50" width="32.00" height="32.00" fill="none" stroke="#fff" stroke-opacity="0.5" stroke-width="1"/>
<rect x="1.50" y="683.50" width="34.00" height="34.00" fill="url(#lbn)" stroke="#8e8e8e" stroke-width="1"/><rect x="2.50" y="684.50" width="32.00" height="32.00" fill="none" stroke="#fff" stroke-opacity="0.5" stroke-width="1"/>
<rect x="1.50" y="726.50" width="34.00" height="34.00" fill="url(#lbn)" stroke="#8e8e8e" stroke-width="1"/><rect x="2.50" y="727.50" width="32.00" height="32.00" fill="none" stroke="#fff" stroke-opacity="0.5" stroke-width="1"/>
<rect x="36.50" y="726.50" width="34.00" height="34.00" fill="url(#lbn)" stroke="#8e8e8e" stroke-width="1"/><rect x="37.50" y="727.50" width="32.00" height="32.00" fill="none" stroke="#fff" stroke-opacity="0.5" stroke-width="1"/>
<rect x="1.50" y="769.50" width="34.00" height="34.00" fill="url(#lbn)" stroke="#8e8e8e" stroke-width="1"/><rect x="2.50" y="770.50" width="32.00" height="32.00" fill="none" stroke="#fff" stroke-opacity="0.5" stroke-width="1"/>
<path d="M13.4 172.6H21.8M17.6 168.4V176.8" stroke="#111" stroke-width="0.9" fill="none" /><circle cx="42.4" cy="162.5" r="1.8" fill="#ff0000"/><circle cx="42.4" cy="169.5" r="1.8" fill="#ff0000"/><circle cx="42.4" cy="176.5" r="1.8" fill="#ff0000"/><circle cx="42.4" cy="183.5" r="1.8" fill="#ff0000"/><circle cx="49.4" cy="162.5" r="1.8" fill="#ff0000"/><circle cx="49.4" cy="169.5" r="1.8" fill="#ff0000"/><circle cx="49.4" cy="176.5" r="1.8" fill="#ff0000"/><circle cx="49.4" cy="183.5" r="1.8" fill="#ff0000"/><circle cx="56.5" cy="162.5" r="1.8" fill="#ff0000"/><circle cx="56.5" cy="169.5" r="1.8" fill="#ff0000"/><circle cx="56.5" cy="176.5" r="1.8" fill="#ff0000"/><circle cx="56.5" cy="183.5" r="1.8" fill="#ff0000"/><circle cx="63.5" cy="162.5" r="1.8" fill="#ff0000"/><circle cx="63.5" cy="169.5" r="1.8" fill="#ff0000"/><circle cx="63.5" cy="176.5" r="1.8" fill="#ff0000"/><circle cx="63.5" cy="183.5" r="1.8" fill="#ff0000"/><path d="M7.5 215.3L28.5 226.6" stroke="#111" stroke-width="1.1" fill="none" /><path d="M15.8 205.7C16 213 21 218 28.5 218.1" stroke="#111" stroke-width="1.1" fill="none" /><circle cx="7.5" cy="215.3" r="1.9" fill="#ff0000"/><circle cx="28.5" cy="226.6" r="1.9" fill="#ff0000"/><circle cx="15.8" cy="205.7" r="1.9" fill="#ff0000"/><circle cx="28.5" cy="218.1" r="1.9" fill="#ff0000"/><path d="M42.3 216.7L64 205" stroke="#111" stroke-width="1.1" fill="none" /><path d="M50.9 226.6C51.5 218.5 56 214.2 63.5 213.8" stroke="#111" stroke-width="1.1" fill="none" /><circle cx="42.3" cy="216.7" r="1.9" fill="#ff0000"/><circle cx="47.7" cy="213.9" r="1.9" fill="#ff0000"/><circle cx="53" cy="211" r="1.9" fill="#ff0000"/><circle cx="58.3" cy="208.2" r="1.9" fill="#ff0000"/><circle cx="64" cy="205" r="1.9" fill="#ff0000"/><circle cx="50.9" cy="226.6" r="1.9" fill="#ff0000"/><circle cx="51.9" cy="221.6" r="1.9" fill="#ff0000"/><circle cx="54.4" cy="217.5" r="1.9" fill="#ff0000"/><circle cx="58.4" cy="215.1" r="1.9" fill="#ff0000"/><circle cx="63.5" cy="213.8" r="1.9" fill="#ff0000"/><path d="M9.6 241.2L19.4 252.4" stroke="#111" stroke-width="1.1" fill="none" /><path d="M15.8 261.2C16.6 254 21 249.6 28.6 248.4" stroke="#111" stroke-width="1.1" fill="none" /><path d="M16.6 247.6C18.6 245.2 22.6 245.4 24.2 248.6" stroke="#333" stroke-width="0.6" fill="none" /><circle cx="19.4" cy="252.4" r="1.9" fill="#ff0000"/><circle cx="56.5" cy="248.1" r="6.9" fill="none" stroke="#111" stroke-width="1.1"/><path d="M43.2 259.8L50.6 245.4" stroke="#111" stroke-width="1.1" fill="none" /><circle cx="50.6" cy="245.4" r="1.9" fill="#ff0000"/><path d="M6.6 286.6L28.6 275.7" stroke="#111" stroke-width="1.1" fill="none" /><path d="M15.5 296.5C16 289 21 283.6 28.6 283.3" stroke="#111" stroke-width="1.1" fill="none" /><circle cx="17.6" cy="281.2" r="1.9" fill="#ff0000"/><circle cx="27.9" cy="296.1" r="1.9" fill="#ff0000"/><circle cx="53" cy="286" r="10" fill="none" stroke="#111" stroke-width="1.1"/><circle cx="53" cy="286" r="1.9" fill="#ff0000"/><circle cx="43" cy="286" r="1.9" fill="#ff0000"/><circle cx="63" cy="286" r="1.9" fill="#ff0000"/><circle cx="53" cy="276" r="1.9" fill="#ff0000"/><circle cx="53" cy="296" r="1.9" fill="#ff0000"/><path d="M6.9 329.5L28.8 318.3" stroke="#111" stroke-width="1.1" fill="none" /><path d="M15.8 339.4C16.4 332 21 327 28.6 326.5" stroke="#111" stroke-width="1.1" fill="none" /><circle cx="17.9" cy="324" r="1.9" fill="#ff0000"/><circle cx="19.4" cy="330.4" r="1.9" fill="#ff0000"/><rect x="41.3" y="319.8" width="23.4" height="18.8" fill="none" stroke="#222" stroke-width="1.3"/><path d="M42 338L64 320.4" stroke="#777" stroke-width="0.7" fill="none" stroke-dasharray="2 1.6"/><circle cx="53" cy="329" r="1.9" fill="#ff0000"/><path d="M8.3 372.6L28.8 361.2" stroke="#111" stroke-width="1.1" fill="none" /><path d="M16.2 382.4C16.4 376 20.6 370.4 28.6 369.6" stroke="#111" stroke-width="1.1" fill="none" /><circle cx="15.3" cy="368.9" r="1.9" fill="#ff0000"/><circle cx="19" cy="374.2" r="1.9" fill="#ff0000"/><path d="M6.4 368.4L12 365.6" stroke="#111" stroke-width="1" fill="none" /><path d="M13.2 364.9L9.4 364.8L10.8 367.5Z" fill="#000"/><path d="M20.8 381.8L22 377.8" stroke="#111" stroke-width="1" fill="none" /><path d="M22.5 376.4L20.4 379L23.2 379.8Z" fill="#000"/><path d="M41.6 373.2L63.6 360.8" stroke="#111" stroke-width="1" fill="none" stroke-dasharray="2.6 2"/><circle cx="63.6" cy="360.8" r="1.3" fill="#000"/><circle cx="42.3" cy="372.8" r="1.3" fill="#000"/><path d="M41.4 369.2L46.8 366.5" stroke="#111" stroke-width="1" fill="none" /><path d="M48 365.8L44.2 365.6L45.5 368.3Z" fill="#000"/><circle cx="49.9" cy="368.7" r="1.9" fill="#ff0000"/><text x="40.3" y="384.6" font-family="Liberation Sans, sans-serif" font-size="10.6" fill="#111">1</text><text x="60.3" y="374.6" font-family="Liberation Sans, sans-serif" font-size="10.6" fill="#111">2</text><path d="M5.9 412.6L29.9 419.8" stroke="#111" stroke-width="1.1" fill="none" /><path d="M24.7 402.8L18.3 426.8" stroke="#111" stroke-width="1.1" fill="none" /><circle cx="21" cy="417.4" r="1.9" fill="#ff0000"/><path d="M43 416.4L53 419.8" stroke="#111" stroke-width="1.1" fill="none" /><path d="M62.7 406.5L60.3 417" stroke="#111" stroke-width="1.1" fill="none" /><circle cx="58.7" cy="421.4" r="1.9" fill="#ff0000"/>
<text x="7.3" y="461.8" font-family="Liberation Sans, sans-serif" font-size="10.8" fill="#1a1a1a">Auto</text><path d="M15.2 489.4V504.8H30.9" stroke="#555" stroke-width="1.3" fill="none" /><text x="6.6" y="496.2" font-family="Liberation Sans, sans-serif" font-size="10.5" fill="#111">y</text><text x="24.4" y="512.8" font-family="Liberation Sans, sans-serif" font-size="10.5" fill="#111">x</text><circle cx="27.9" cy="491" r="1.9" fill="#ff0000"/><path d="M41 510.2L57.6 493.6" stroke="#111" stroke-width="1.2" fill="none" /><path d="M41 510.2H65" stroke="#333" stroke-width="1.2" fill="none" /><path d="M57.6 493.6C62 498 64.6 503.6 65 510.2" stroke="#111" stroke-width="1.1" fill="none" /><text x="44" y="500.2" font-family="Liberation Sans, sans-serif" font-size="9.5" fill="#111">r</text><text x="54.3" y="506.4" font-family="Liberation Sans, sans-serif" font-size="10" fill="#111">a</text><circle cx="57.6" cy="493.6" r="1.9" fill="#ff0000"/><path d="M9.8 535.8H26.1M9.8 535.8V552" stroke="#999" stroke-width="0.6" fill="none" /><circle cx="9.8" cy="535.8" r="2.5" fill="#ff0000"/><circle cx="26.1" cy="536" r="1.3" fill="#000"/><circle cx="9.8" cy="552" r="1.3" fill="#000"/><text x="23.6" y="546.7" font-family="Liberation Sans, sans-serif" font-size="10.6" fill="#111">2</text><text x="13.5" y="554.6" font-family="Liberation Sans, sans-serif" font-size="10.6" fill="#111">1</text><path d="M44.8 552H60.8M61 536V552" stroke="#999" stroke-width="0.6" fill="none" /><circle cx="61" cy="536" r="1.3" fill="#000"/><circle cx="44.8" cy="552" r="1.3" fill="#000"/><circle cx="60.8" cy="552" r="2.5" fill="#ff0000"/><text x="52.9" y="540.8" font-family="Liberation Sans, sans-serif" font-size="10.6" fill="#111">2</text><text x="42.2" y="548.6" font-family="Liberation Sans, sans-serif" font-size="10.6" fill="#111">1</text><g stroke="#f2b0b0" stroke-width="0.8" fill="none"><path d="M9.6 577.4H29V595.2Q29 596.6 27.6 596.6H14.4V592.2H7V580Q7 577.4 9.6 577.4Z"/><circle cx="13.6" cy="584.6" r="3.4"/><path d="M17.6 591.4L24.8 583.6V591.4Z"/></g><circle cx="17.9" cy="587" r="1.7" fill="#ff0000"/><path d="M14.2 630.3H21.8M18 626.5V634.1" stroke="#333" stroke-width="0.9" fill="none" /><path d="M40.8 629.5H64.5M52.5 617.8V641.2" stroke="#000" stroke-width="1.1" fill="none" /><circle cx="52.5" cy="629.5" r="3.5" fill="none" stroke="#ff0000" stroke-width="0.9"/><path d="M49.0 629.5H56.0M52.5 626.0V633.0" stroke="#ff0000" stroke-width="0.8"/><path d="M5.5 664.4H29.3" stroke="#000" stroke-width="1.1" fill="none" /><circle cx="17.4" cy="664.4" r="3.5" fill="none" stroke="#ff0000" stroke-width="0.9"/><path d="M13.899999999999999 664.4H20.9M17.4 660.9V667.9" stroke="#ff0000" stroke-width="0.8"/><path d="M52.5 652.8V676.4" stroke="#000" stroke-width="1.1" fill="none" /><circle cx="52.5" cy="664.4" r="3.5" fill="none" stroke="#ff0000" stroke-width="0.9"/><path d="M49.0 664.4H56.0M52.5 660.9V667.9" stroke="#ff0000" stroke-width="0.8"/><path d="M9.4 687.8V692M14.4 688.8L13.4 693M19.6 691.4L17.8 695M24.4 695L21.4 698.2M29.4 704.6L25.2 705.8M30 710.2H25.2" stroke="#aaa" stroke-width="0.8" fill="none" /><path d="M9 709L27.6 698.4" stroke="#000" stroke-width="1.1" fill="none" /><circle cx="9" cy="709" r="3.6" fill="none" stroke="#ff0000" stroke-width="0.9"/><path d="M5.4 709H12.6M9 705.4V712.6" stroke="#ff0000" stroke-width="0.8"/><circle cx="15" cy="737.4" r="3.7" fill="none" stroke="#ff0000" stroke-width="0.9"/><path d="M11.3 737.4H18.7M15 733.6999999999999V741.1" stroke="#ff0000" stroke-width="0.8"/><path d="M16.2 738.6V748.6L18.6 746.8L20.6 751.2L22.4 750.4L20.4 746L23.6 745.6Z" fill="#f4f4f4" stroke="#555" stroke-width="0.8" stroke-linejoin="round"/><ellipse cx="46.2" cy="738.4" rx="2.3" ry="3.6" fill="none" stroke="#000" stroke-width="1.1"/><path d="M48.800000000000004 737.8H61.6V743.0H59.8V740.6H58.8V742.1999999999999H57.0V739.4H48.800000000000004Z" fill="#000"/><circle cx="52.5" cy="750.6" r="3.5" fill="none" stroke="#ff0000" stroke-width="0.9"/><path d="M49.0 750.6H56.0M52.5 747.1V754.1" stroke="#ff0000" stroke-width="0.8"/><ellipse cx="11.0" cy="785.6" rx="2.3" ry="3.6" fill="none" stroke="#000" stroke-width="1.1"/><path d="M13.600000000000001 785.0H26.4V790.2H24.6V787.8000000000001H23.6V789.4H21.8V786.6H13.600000000000001Z" fill="#000"/>
</svg>
<svg id="rp" class="abs" style="left:1154px;top:108px;overflow:hidden" width="346" height="690" viewBox="1154 108 346 690">
<defs><linearGradient id="rtb" x1="0" y1="0" x2="0" y2="1"><stop offset="0" stop-color="#e4e4e4"/><stop offset="1" stop-color="#f8f8f8"/></linearGradient><linearGradient id="rtt" x1="0" y1="0" x2="0" y2="1"><stop offset="0" stop-color="#ebebeb"/><stop offset="1" stop-color="#dcdcdc"/></linearGradient><linearGradient id="rbar" x1="0" y1="0" x2="1" y2="0"><stop offset="0" stop-color="#ededed"/><stop offset="0.2" stop-color="#e8e8e8"/><stop offset="0.65" stop-color="#d4d4d4"/><stop offset="1" stop-color="#c8c8c8"/></linearGradient><linearGradient id="scr" x1="0" y1="0" x2="1" y2="0"><stop offset="0" stop-color="#d8d8d8"/><stop offset="0.5" stop-color="#8a8a8a"/><stop offset="1" stop-color="#5a5a5a"/></linearGradient></defs>
<rect x="1154" y="108" width="1" height="690" fill="#bcbcbc"/><rect x="1155" y="108" width="1" height="690" fill="#d2d2d2"/>
<rect x="1155.6" y="108" width="299" height="690" fill="#fff"/>
<rect x="1155.6" y="108" width="299" height="22.6" fill="url(#rtt)"/>
<rect x="1155.6" y="130.2" width="299" height="1.2" fill="#b4b4b4"/>
<circle cx="1163.9" cy="117.9" r="6.9" fill="#6f6f6f"/>
<path d="M1160.7 114.7L1167.1 121.1M1167.1 114.7L1160.7 121.1" stroke="#f2f2f2" stroke-width="2" stroke-linecap="round"/>
<circle cx="1182" cy="117.9" r="6.9" fill="#6f6f6f"/>
<rect x="1180.2" y="114.6" width="5.4" height="4.6" rx="0.8" fill="none" stroke="#f2f2f2" stroke-width="1"/>
<rect x="1178.2" y="116.8" width="5.4" height="4.6" rx="0.8" fill="#6f6f6f" stroke="#f2f2f2" stroke-width="1"/>
<rect x="1155.6" y="131.2" width="299" height="24.8" fill="#adadad"/>
<rect x="1156.3" y="132" width="58.4" height="22.9" fill="url(#rtb)"/>
<rect x="1216.3" y="132" width="58.4" height="22.9" fill="url(#rtb)"/>
<rect x="1276.3" y="132" width="58.4" height="22.9" fill="url(#rtb)"/>
<rect x="1336.3" y="132" width="58.4" height="22.9" fill="url(#rtb)"/>
<rect x="1396.3" y="132" width="58.4" height="22.9" fill="url(#rtb)"/>
<g transform="translate(1185 142.6)" opacity="1.0"><path d="M-7.4 0.2C-5 -5.9 4.6 -6.3 7.5 -0.6C5.4 5.2 -4 6 -7.4 0.2Z" fill="#000"/><path d="M-5.3 0.3C-3.4 -3 3.2 -3.3 5.4 -0.2C3.4 3 -2.8 3.4 -5.3 0.3Z" fill="#fff"/><circle cx="0.1" cy="-0.1" r="3.1" fill="#000"/><circle cx="-1" cy="-1.3" r="0.8" fill="#fff" opacity="0.75"/></g>
<g transform="translate(1244.7 142.6)" opacity="0.9"><path d="M-7.4 0.2C-5 -5.9 4.6 -6.3 7.5 -0.6C5.4 5.2 -4 6 -7.4 0.2Z" fill="#8f8f8f"/><path d="M-5.3 0.3C-3.4 -3 3.2 -3.3 5.4 -0.2C3.4 3 -2.8 3.4 -5.3 0.3Z" fill="#fff"/><circle cx="0.1" cy="-0.1" r="3.1" fill="#8f8f8f"/><circle cx="-1" cy="-1.3" r="0.8" fill="#fff" opacity="0.75"/></g>
<path d="M1298.9 142.7H1310.7M1304.8 136.8V148.6" stroke="#8e0000" stroke-width="3.2"/>
<path d="M1299.5 142.7H1310.1M1304.8 137.4V148" stroke="#f01414" stroke-width="2"/>
<rect x="1359.2" y="141.4" width="11.8" height="3" rx="0.5" fill="#f01414" stroke="#8e0000" stroke-width="0.6"/>
<g transform="translate(1417.8 150) rotate(-44)"><path d="M0 0L4.2 -1.7H19.6V1.7H4.2Z" fill="#d9952a" stroke="#8a5a12" stroke-width="0.6" stroke-linejoin="round"/><path d="M4.2 -0.6H16.6" stroke="#f1c25e" stroke-width="0.9"/><path d="M16.200000000000003 -1.7H19.6V1.7H16.200000000000003Z" fill="#e8242a"/><path d="M0 0L4.2 -1.7V1.7Z" fill="#e6c48a"/><path d="M0 0L1.8 -0.9V0.9Z" fill="#3a2a10"/></g>
<rect x="1161.5" y="163.6" width="15.2" height="8.3" fill="#fff" stroke="#000" stroke-width="1"/>
<g transform="translate(1423 166.9)" opacity="1.0"><path d="M-7.4 0.2C-5 -5.9 4.6 -6.3 7.5 -0.6C5.4 5.2 -4 6 -7.4 0.2Z" fill="#000"/><path d="M-5.3 0.3C-3.4 -3 3.2 -3.3 5.4 -0.2C3.4 3 -2.8 3.4 -5.3 0.3Z" fill="#fff"/><circle cx="0.1" cy="-0.1" r="3.1" fill="#000"/><circle cx="-1" cy="-1.3" r="0.8" fill="#fff" opacity="0.75"/></g>
<path d="M1441.6 166.9V164.70000000000002A3.4 3.6 0 0 1 1448.4 164.70000000000002V166.9" fill="none" stroke="#bdbdbd" stroke-width="1.3"/><rect x="1440" y="166.60000000000002" width="10" height="7.3" rx="0.6" fill="#b4b4b4"/>
<rect x="1161.5" y="183.6" width="15.2" height="8.3" fill="#ff0000" stroke="#000" stroke-width="1"/>
<g transform="translate(1423 186.9)" opacity="1.0"><path d="M-7.4 0.2C-5 -5.9 4.6 -6.3 7.5 -0.6C5.4 5.2 -4 6 -7.4 0.2Z" fill="#000"/><path d="M-5.3 0.3C-3.4 -3 3.2 -3.3 5.4 -0.2C3.4 3 -2.8 3.4 -5.3 0.3Z" fill="#fff"/><circle cx="0.1" cy="-0.1" r="3.1" fill="#000"/><circle cx="-1" cy="-1.3" r="0.8" fill="#fff" opacity="0.75"/></g>
<path d="M1441.6 186.9V184.70000000000002A3.4 3.6 0 0 1 1448.4 184.70000000000002V186.9" fill="none" stroke="#bdbdbd" stroke-width="1.3"/><rect x="1440" y="186.60000000000002" width="10" height="7.3" rx="0.6" fill="#b4b4b4"/>
<rect x="1161.5" y="203.6" width="15.2" height="8.3" fill="#000" stroke="#000" stroke-width="1"/>
<g transform="translate(1423 206.9)" opacity="1.0"><path d="M-7.4 0.2C-5 -5.9 4.6 -6.3 7.5 -0.6C5.4 5.2 -4 6 -7.4 0.2Z" fill="#000"/><path d="M-5.3 0.3C-3.4 -3 3.2 -3.3 5.4 -0.2C3.4 3 -2.8 3.4 -5.3 0.3Z" fill="#fff"/><circle cx="0.1" cy="-0.1" r="3.1" fill="#000"/><circle cx="-1" cy="-1.3" r="0.8" fill="#fff" opacity="0.75"/></g>
<path d="M1441.6 206.9V204.70000000000002A3.4 3.6 0 0 1 1448.4 204.70000000000002V206.9" fill="none" stroke="#bdbdbd" stroke-width="1.3"/><rect x="1440" y="206.60000000000002" width="10" height="7.3" rx="0.6" fill="#b4b4b4"/>
<rect x="1161.5" y="223.6" width="15.2" height="8.3" fill="#fff" stroke="#000" stroke-width="1"/>
<g transform="translate(1423 226.9)" opacity="1.0"><path d="M-7.4 0.2C-5 -5.9 4.6 -6.3 7.5 -0.6C5.4 5.2 -4 6 -7.4 0.2Z" fill="#000"/><path d="M-5.3 0.3C-3.4 -3 3.2 -3.3 5.4 -0.2C3.4 3 -2.8 3.4 -5.3 0.3Z" fill="#fff"/><circle cx="0.1" cy="-0.1" r="3.1" fill="#000"/><circle cx="-1" cy="-1.3" r="0.8" fill="#fff" opacity="0.75"/></g>
<path d="M1441.6 226.9V224.70000000000002A3.4 3.6 0 0 1 1448.4 224.70000000000002V226.9" fill="none" stroke="#bdbdbd" stroke-width="1.3"/><rect x="1440" y="226.60000000000002" width="10" height="7.3" rx="0.6" fill="#b4b4b4"/>
<g transform="translate(1394.4 233.6) rotate(-43)"><path d="M0 0L4.2 -1.6H18.6V1.6H4.2Z" fill="#d9952a" stroke="#8a5a12" stroke-width="0.6" stroke-linejoin="round"/><path d="M4.2 -0.6H15.600000000000001" stroke="#f1c25e" stroke-width="0.9"/><path d="M15.200000000000001 -1.6H18.6V1.6H15.200000000000001Z" fill="#e8242a"/><path d="M0 0L4.2 -1.6V1.6Z" fill="#e6c48a"/><path d="M0 0L1.8 -0.9V0.9Z" fill="#3a2a10"/></g>
<text x="1183.10" y="171.8" font-size="13.2" letter-spacing="-0.239" fill="#111" stroke="#111" stroke-width="0.2" font-family="Liberation Sans, sans-serif">0</text>
<text x="1183.10" y="191.8" font-size="13.2" letter-spacing="0.057" fill="#111" stroke="#111" stroke-width="0.2" font-family="Liberation Sans, sans-serif">Center</text>
<text x="1183.10" y="211.8" font-size="13.2" letter-spacing="0.054" fill="#111" stroke="#111" stroke-width="0.2" font-family="Liberation Sans, sans-serif">Hidden</text>
<text x="1183.10" y="231.8" font-size="13.2" letter-spacing="0.075" fill="#111" stroke="#111" stroke-width="0.2" font-family="Liberation Sans, sans-serif">Visible</text>
<text x="1297.40" y="123.2" font-size="11.6" letter-spacing="-0.010" fill="#1a1a1a" stroke="#1a1a1a" stroke-width="0.3" font-family="Liberation Sans, sans-serif">Layer List</text>
<rect x="1454" y="108" width="46" height="690" fill="url(#rbar)"/><rect x="1454" y="108" width="1" height="690" fill="#c6c6c6"/><rect x="1455" y="108" width="1" height="690" fill="#f4f4f4"/><rect x="1498.2" y="108" width="1.8" height="690" fill="#b9b9b9"/>
<rect x="1461.9" y="116" width="2" height="2" fill="#9c9c9c"/>
<rect x="1467.9" y="116" width="2" height="2" fill="#9c9c9c"/>
<rect x="1473.9" y="116" width="2" height="2" fill="#9c9c9c"/>
<rect x="1479.9" y="116" width="2" height="2" fill="#9c9c9c"/>
<rect x="1485.9" y="116" width="2" height="2" fill="#9c9c9c"/>
<rect x="1456" y="120" width="44" height="42.6" rx="5" fill="#b5b5b5"/>
<rect x="1456" y="416.6" width="44" height="43" rx="5" fill="#b5b5b5"/>
<path d="M1458 261.5H1500" stroke="#6c6c6c" stroke-width="1" stroke-dasharray="1 2"/>
<path d="M1458 409.5H1500" stroke="#6c6c6c" stroke-width="1" stroke-dasharray="1 2"/>
<rect x="1463.6000000000001" y="127.7" width="26.8" height="26.8" fill="#fff" stroke="#111" stroke-width="0.8"/><rect x="1463.2" y="127.3" width="27.6" height="4.5" fill="#000"/><rect x="1464.2" y="128.3" width="2.9" height="2.9" fill="#fff"/><path d="M1470.4 141.4L1476.6 138V148.6L1470.4 151.8Z" fill="#9a9a9a" stroke="#555" stroke-width="0.5"/><path d="M1472.2 141L1478.4 137.6V148.2L1472.2 151.4Z" fill="#c9c9c9" stroke="#555" stroke-width="0.5"/><path d="M1474.2 140.8L1483 136.6V147L1474.2 151.2Z" fill="#fafafa" stroke="#666" stroke-width="0.5"/><path d="M1476.8 148L1480.2 141L1481 146.6M1477.8 146L1480.8 144.6" stroke="#ff5a5a" stroke-width="0.7" fill="none"/>
<rect x="1463.6000000000001" y="174.6" width="26.8" height="26.8" fill="#fff" stroke="#111" stroke-width="0.8"/><rect x="1463.2" y="174.2" width="27.6" height="4.5" fill="#000"/><rect x="1464.2" y="175.2" width="2.9" height="2.9" fill="#fff"/><rect x="1470.2" y="184.4" width="10.8" height="7.4" fill="#f8efc4" stroke="#555" stroke-width="0.7"/><circle cx="1479.3" cy="191.2" r="4.2" fill="#f8efc4" fill-opacity="0.85" stroke="#555" stroke-width="0.7"/>
<rect x="1463.6000000000001" y="220.8" width="26.8" height="26.8" fill="#fff" stroke="#111" stroke-width="0.8"/><rect x="1463.2" y="220.4" width="27.6" height="4.5" fill="#000"/><rect x="1464.2" y="221.4" width="2.9" height="2.9" fill="#fff"/><rect x="1468.6" y="230.3" width="16.8" height="11.4" rx="2.2" fill="#f6f6f4" stroke="#bccbe8" stroke-width="0.9"/>
<rect x="1463.6000000000001" y="276.5" width="26.8" height="26.8" fill="#fff" stroke="#111" stroke-width="0.8"/><rect x="1463.2" y="276.1" width="27.6" height="4.5" fill="#000"/><rect x="1464.2" y="277.1" width="2.9" height="2.9" fill="#fff"/><rect x="1466.4" y="284.5" width="4.4" height="3" rx="0.5" fill="#000"/><rect x="1473.3" y="284.6" width="14.4" height="2.8" fill="#fff" stroke="#444" stroke-width="0.6"/><rect x="1466.4" y="290.5" width="4.4" height="3" rx="0.5" fill="#000"/><rect x="1473.3" y="290.6" width="14.4" height="2.8" fill="#fff" stroke="#444" stroke-width="0.6"/><rect x="1466.4" y="296.5" width="4.4" height="3" rx="0.5" fill="#000"/><rect x="1473.3" y="296.6" width="14.4" height="2.8" fill="#fff" stroke="#444" stroke-width="0.6"/>
<rect x="1463.6000000000001" y="322.59999999999997" width="26.8" height="26.8" fill="#fff" stroke="#111" stroke-width="0.8"/><rect x="1463.2" y="322.2" width="27.6" height="4.5" fill="#000"/><rect x="1464.2" y="323.2" width="2.9" height="2.9" fill="#fff"/><path d="M1469.6 332.2L1475.4 339.6V343.6L1478.6 344.8V339.6L1484.4 332.2Z" fill="#b5b5b5" stroke="#666" stroke-width="0.5"/><ellipse cx="1477" cy="332" rx="7.4" ry="1.5" fill="#7d7d7d" stroke="#555" stroke-width="0.5"/>
<rect x="1463.6000000000001" y="368.7" width="26.8" height="26.8" fill="#fff" stroke="#111" stroke-width="0.8"/><rect x="1463.2" y="368.3" width="27.6" height="4.5" fill="#000"/><rect x="1464.2" y="369.3" width="2.9" height="2.9" fill="#fff"/><path d="M1469 377.2L1474.4 380.4V387.6L1469 390.8Z" fill="#fff" stroke="#444" stroke-width="0.7"/><rect x="1474.4" y="380.2" width="10.2" height="7.4" rx="1.4" fill="url(#scr)"/><rect x="1474.4" y="380.2" width="2.6" height="7.4" fill="#fff"/><path d="M1466.8 383.8H1487.4" stroke="#ff8a8a" stroke-width="0.8" stroke-dasharray="2.4 0.8"/>
<rect x="1463.6000000000001" y="424.4" width="26.8" height="26.8" fill="#fff" stroke="#111" stroke-width="0.8"/><rect x="1463.2" y="424" width="27.6" height="4.5" fill="#000"/><rect x="1464.2" y="425" width="2.9" height="2.9" fill="#fff"/><path d="M1465.6 432.6H1480" stroke="#9a9a9a" stroke-width="1" stroke-dasharray="4.6 0.7 2.4 0.7"/><path d="M1465.6 436H1479" stroke="#9a9a9a" stroke-width="1" stroke-dasharray="4.6 0.7 2.4 0.7"/><path d="M1465.6 439.4H1482" stroke="#9a9a9a" stroke-width="1" stroke-dasharray="4.6 0.7 2.4 0.7"/><path d="M1465.6 442.8H1483" stroke="#9a9a9a" stroke-width="1" stroke-dasharray="4.6 0.7 2.4 0.7"/><path d="M1463.6 446.6H1490.4" stroke="#222" stroke-width="0.6"/><path d="M1465.6 449.2H1468M1472 449.2H1488.4" stroke="#555" stroke-width="1.3"/>
<rect x="1463.6000000000001" y="471.59999999999997" width="26.8" height="26.8" fill="#fff" stroke="#111" stroke-width="0.8"/><rect x="1463.2" y="471.2" width="27.6" height="4.5" fill="#000"/><rect x="1464.2" y="472.2" width="2.9" height="2.9" fill="#fff"/><g transform="translate(1476.9 487) scale(0.5) translate(-678 -45.7)"><rect x="665" y="33.2" width="26" height="27.1" rx="1.5" fill="url(#gboard)" stroke="#94610f" stroke-width="0.8"/><rect x="667.8" y="34.8" width="20.4" height="23.4" fill="url(#gpaper)" stroke="#a9a9a9" stroke-width="0.4"/><path d="M688.2 53.4v4.8h-5.4v-4.8z" fill="url(#gfoldc)"/><path d="M671.4 40.5h13.6M671.4 43.3h13M671.4 46.1h11.6M671.4 48.8h13.6M671.4 51.5h8.6" stroke="#c2c2c2" stroke-width="0.9"/><path d="M674.3 30.2h7.4v2.2h2.6q0.4 0 0.4 0.5v3.6q0 0.6 -0.6 0.6h-12.2q-0.6 0 -0.6 -0.6v-3.6q0 -0.5 0.4 -0.5h2.6z" fill="url(#gclip)" stroke="#6f6f64" stroke-width="0.5"/></g>
</svg>
<svg id="rt" class="abs" style="left:95px;top:132px;overflow:hidden" width="1043" height="23" viewBox="0 0 1043 23">
<rect width="1043" height="23" fill="#ececec"/>
<path d="M1.5 16V23M11.5 20V23M21.5 16V23M31.5 20V23M41.5 16V23M51.5 20V23M61.5 16V23M71.5 20V23M81.5 16V23M91.5 20V23M101.5 16V23M111.5 20V23M121.5 16V23M131.5 20V23M141.5 16V23M151.5 20V23M161.5 16V23M171.5 20V23M181.5 16V23M191.5 20V23M201.5 16V23M211.5 20V23M221.5 16V23M231.5 20V23M241.5 16V23M251.5 20V23M261.5 16V23M271.5 20V23M281.5 16V23M291.5 20V23M301.5 16V23M311.5 20V23M321.5 16V23M331.5 20V23M341.5 16V23M351.5 20V23M361.5 16V23M371.5 20V23M381.5 16V23M391.5 20V23M401.5 16V23M411.5 20V23M421.5 16V23M431.5 20V23M441.5 16V23M451.5 20V23M461.5 16V23M471.5 20V23M481.5 16V23M491.5 20V23M501.5 16V23M511.5 20V23M521.5 16V23M531.5 20V23M541.5 16V23M551.5 20V23M561.5 16V23M571.5 20V23M581.5 16V23M591.5 20V23M601.5 16V23M611.5 20V23M621.5 16V23M631.5 20V23M641.5 16V23M651.5 20V23M661.5 16V23M671.5 20V23M681.5 16V23M691.5 20V23M701.5 16V23M711.5 20V23M721.5 16V23M731.5 20V23M741.5 16V23M751.5 20V23M761.5 16V23M771.5 20V23M781.5 16V23M791.5 20V23M801.5 16V23M811.5 20V23M821.5 16V23M831.5 20V23M841.5 16V23M851.5 20V23M861.5 16V23M871.5 20V23M881.5 16V23M891.5 20V23M901.5 16V23M911.5 20V23M921.5 16V23M931.5 20V23M941.5 16V23M951.5 20V23M961.5 16V23M971.5 20V23M981.5 16V23M991.5 20V23M1001.5 16V23M1011.5 20V23M1021.5 16V23M1031.5 20V23M1041.5 16V23" stroke="#666" stroke-width="1" fill="none"/>
<g transform="translate(0 8.95) scale(1 1)" font-family="Liberation Sans, sans-serif" font-size="9.7" fill="#000" stroke="#000" stroke-width="0.22" text-anchor="middle"><text transform="translate(0.20 0) rotate(0.1)" text-anchor="start">2</text><text transform="translate(21.3 0) rotate(0.1)">0</text><text transform="translate(41.3 0) rotate(0.1)">2</text><text transform="translate(61.3 0) rotate(0.1)">4</text><text transform="translate(81.3 0) rotate(0.1)">6</text><text transform="translate(101.3 0) rotate(0.1)">8</text><text transform="translate(121.3 0) rotate(0.1)"><tspan letter-spacing="-0.95">1</tspan>0</text><text transform="translate(141.3 0) rotate(0.1)"><tspan letter-spacing="-0.95">1</tspan>2</text><text transform="translate(161.3 0) rotate(0.1)"><tspan letter-spacing="-0.95">1</tspan>4</text><text transform="translate(181.3 0) rotate(0.1)"><tspan letter-spacing="-0.95">1</tspan>6</text><text transform="translate(201.3 0) rotate(0.1)"><tspan letter-spacing="-0.95">1</tspan>8</text><text transform="translate(221.3 0) rotate(0.1)">20</text><text transform="translate(241.3 0) rotate(0.1)">22</text><text transform="translate(261.3 0) rotate(0.1)">24</text><text transform="translate(281.3 0) rotate(0.1)">26</text><text transform="translate(301.3 0) rotate(0.1)">28</text><text transform="translate(321.3 0) rotate(0.1)">30</text><text transform="translate(341.3 0) rotate(0.1)">32</text><text transform="translate(361.3 0) rotate(0.1)">34</text><text transform="translate(381.3 0) rotate(0.1)">36</text><text transform="translate(401.3 0) rotate(0.1)">38</text><text transform="translate(421.3 0) rotate(0.1)">40</text><text transform="translate(441.3 0) rotate(0.1)">42</text><text transform="translate(461.3 0) rotate(0.1)">44</text><text transform="translate(481.3 0) rotate(0.1)">46</text><text transform="translate(501.3 0) rotate(0.1)">48</text><text transform="translate(521.3 0) rotate(0.1)">50</text><text transform="translate(541.3 0) rotate(0.1)">52</text><text transform="translate(561.3 0) rotate(0.1)">54</text><text transform="translate(581.3 0) rotate(0.1)">56</text><text transform="translate(601.3 0) rotate(0.1)">58</text><text transform="translate(621.3 0) rotate(0.1)">60</text><text transform="translate(641.3 0) rotate(0.1)">62</text><text transform="translate(661.3 0) rotate(0.1)">64</text><text transform="translate(681.3 0) rotate(0.1)">66</text><text transform="translate(701.3 0) rotate(0.1)">68</text><text transform="translate(721.3 0) rotate(0.1)">70</text><text transform="translate(741.3 0) rotate(0.1)">72</text><text transform="translate(761.3 0) rotate(0.1)">74</text><text transform="translate(781.3 0) rotate(0.1)">76</text><text transform="translate(801.3 0) rotate(0.1)">78</text><text transform="translate(821.3 0) rotate(0.1)">80</text><text transform="translate(841.3 0) rotate(0.1)">82</text><text transform="translate(861.3 0) rotate(0.1)">84</text><text transform="translate(881.3 0) rotate(0.1)">86</text><text transform="translate(901.3 0) rotate(0.1)">88</text><text transform="translate(921.3 0) rotate(0.1)">90</text><text transform="translate(941.3 0) rotate(0.1)">92</text><text transform="translate(961.3 0) rotate(0.1)">94</text><text transform="translate(981.3 0) rotate(0.1)">96</text><text transform="translate(1001.3 0) rotate(0.1)">98</text><text transform="translate(1021.3 0) rotate(0.1)"><tspan letter-spacing="-0.95">1</tspan>00</text><text transform="translate(1033.90 0) rotate(0.1)" text-anchor="start"><tspan letter-spacing="-0.95">1</tspan>0</text></g>
<path d="M115.5 13H127.2L121.4 18.9Z" fill="#000"/>
</svg>
<svg id="rl" class="abs" style="left:72px;top:155px;overflow:hidden" width="23" height="577" viewBox="0 0 23 577">
<rect width="23" height="577" fill="#ececec"/>
<path d="M16 578.5H23M20 568.5H23M16 558.5H23M20 548.5H23M16 538.5H23M20 528.5H23M16 518.5H23M20 508.5H23M16 498.5H23M20 488.5H23M16 478.5H23M20 468.5H23M16 458.5H23M20 448.5H23M16 438.5H23M20 428.5H23M16 418.5H23M20 408.5H23M16 398.5H23M20 388.5H23M16 378.5H23M20 368.5H23M16 358.5H23M20 348.5H23M16 338.5H23M20 328.5H23M16 318.5H23M20 308.5H23M16 298.5H23M20 288.5H23M16 278.5H23M20 268.5H23M16 258.5H23M20 248.5H23M16 238.5H23M20 228.5H23M16 218.5H23M20 208.5H23M16 198.5H23M20 188.5H23M16 178.5H23M20 168.5H23M16 158.5H23M20 148.5H23M16 138.5H23M20 128.5H23M16 118.5H23M20 108.5H23M16 98.5H23M20 88.5H23M16 78.5H23M20 68.5H23M16 58.5H23M20 48.5H23M16 38.5H23M20 28.5H23M16 18.5H23M20 8.5H23M16 -1.5H23" stroke="#666" stroke-width="1" fill="none"/>
<g font-family="Liberation Sans, sans-serif" font-size="9.7" fill="#000" stroke="#000" stroke-width="0.22" text-anchor="middle"><text transform="translate(9.25 576.60) rotate(-89.9)" text-anchor="start">0</text><text transform="translate(9.25 558.2) rotate(-89.9)">-<tspan letter-spacing="-0.95">1</tspan>8</text><text transform="translate(9.25 538.2) rotate(-89.9)">-<tspan letter-spacing="-0.95">1</tspan>6</text><text transform="translate(9.25 518.2) rotate(-89.9)">-<tspan letter-spacing="-0.95">1</tspan>4</text><text transform="translate(9.25 498.2) rotate(-89.9)">-<tspan letter-spacing="-0.95">1</tspan>2</text><text transform="translate(9.25 478.2) rotate(-89.9)">-<tspan letter-spacing="-0.95">1</tspan>0</text><text transform="translate(9.25 458.2) rotate(-89.9)">-8</text><text transform="translate(9.25 438.2) rotate(-89.9)">-6</text><text transform="translate(9.25 418.2) rotate(-89.9)">-4</text><text transform="translate(9.25 398.2) rotate(-89.9)">-2</text><text transform="translate(9.25 378.2) rotate(-89.9)">0</text><text transform="translate(9.25 358.2) rotate(-89.9)">2</text><text transform="translate(9.25 338.2) rotate(-89.9)">4</text><text transform="translate(9.25 318.2) rotate(-89.9)">6</text><text transform="translate(9.25 298.2) rotate(-89.9)">8</text><text transform="translate(9.25 278.2) rotate(-89.9)"><tspan letter-spacing="-0.95">1</tspan>0</text><text transform="translate(9.25 258.2) rotate(-89.9)"><tspan letter-spacing="-0.95">1</tspan>2</text><text transform="translate(9.25 238.2) rotate(-89.9)"><tspan letter-spacing="-0.95">1</tspan>4</text><text transform="translate(9.25 218.2) rotate(-89.9)"><tspan letter-spacing="-0.95">1</tspan>6</text><text transform="translate(9.25 198.2) rotate(-89.9)"><tspan letter-spacing="-0.95">1</tspan>8</text><text transform="translate(9.25 178.2) rotate(-89.9)">20</text><text transform="translate(9.25 158.2) rotate(-89.9)">22</text><text transform="translate(9.25 138.2) rotate(-89.9)">24</text><text transform="translate(9.25 118.2) rotate(-89.9)">26</text><text transform="translate(9.25 98.2) rotate(-89.9)">28</text><text transform="translate(9.25 78.2) rotate(-89.9)">30</text><text transform="translate(9.25 58.2) rotate(-89.9)">32</text><text transform="translate(9.25 38.2) rotate(-89.9)">34</text><text transform="translate(9.25 18.2) rotate(-89.9)">36</text><text transform="translate(9.25 -1.8) rotate(-89.9)">38</text></g>
<path d="M12.9 282.5V294.2L19.1 288.4Z" fill="#000"/>
</svg>
<svg id="cv" class="abs" style="left:95px;top:155px" width="1043" height="577" viewBox="0 0 1043 577">
<defs><pattern id="dots" x="1" y="8" width="10" height="10" patternUnits="userSpaceOnUse"><rect x="0" y="0" width="1" height="1" fill="#fff" fill-opacity="0.22"/></pattern><pattern id="dots2" x="2" y="8" width="10" height="10" patternUnits="userSpaceOnUse"><rect x="0" y="0" width="1" height="1" fill="#fff" fill-opacity="0.22"/></pattern></defs>
<rect width="1043" height="577" fill="#000"/>
<path d="M21.5 0V577M121.5 0V577M221.5 0V577M321.5 0V577M421.5 0V577M521.5 0V577M621.5 0V577M721.5 0V577M821.5 0V577M921.5 0V577M1021.5 0V577M0 478.5H1043M0 378.5H1043M0 278.5H1043M0 178.5H1043M0 78.5H1043" stroke="#1d1d1d" stroke-width="1" fill="none"/>
<path d="M1.5 378.5H41.5M21.5 358.5V398.5" stroke="#a00000" stroke-width="1" fill="none"/>
<g stroke="#ffffff" stroke-width="2.5" fill="none">
<rect x="121.5" y="198.5" width="800" height="180"/>
<circle cx="221.5" cy="288.5" r="40"/>
<circle cx="821.5" cy="288.5" r="40"/>
</g>
<g stroke="#ff0000" stroke-width="1.3" fill="none" stroke-dasharray="18.2 6.7 1.4 6.7">
<path d="M101.5 288.5H941.5" stroke-dashoffset="1.6"/>
<path d="M221.5 178.5V398.5" stroke-dashoffset="14.6"/>
<path d="M821.5 178.5V398.5" stroke-dashoffset="14.6"/>
</g>
<rect width="947" height="577" fill="url(#dots)"/><rect x="947" width="96" height="577" fill="url(#dots2)"/>
<text id="lbl" transform="translate(331.3 368.79999999999995) rotate(-90)" font-family="Liberation Sans, sans-serif" font-size="27.67" fill="#fff">104.245.02.4B</text>
<g id="cur">
<g fill="none" transform="translate(121.80000000000001 292.1)">
<circle r="30.5" stroke="#6f8aa3" stroke-opacity="0.12" stroke-width="2"/>
<circle r="32.5" stroke="#6f8aa3" stroke-opacity="0.22" stroke-width="2"/>
<circle r="36" stroke="#6a849c" stroke-opacity="0.4" stroke-width="6.6"/>
<circle r="34.4" stroke="#9fb6c9" stroke-opacity="0.25" stroke-width="0.7"/>
<circle r="36" stroke="#9fb6c9" stroke-opacity="0.3" stroke-width="0.7"/>
<circle r="37.6" stroke="#9fb6c9" stroke-opacity="0.3" stroke-width="0.7"/>
<circle r="39" stroke="#9fb6c9" stroke-opacity="0.3" stroke-width="0.7"/>
<circle r="33" stroke="#9fb6c9" stroke-opacity="0.14" stroke-width="0.7"/>
</g>
<circle cx="121.5" cy="288.5" r="5" fill="none" stroke="#e01000" stroke-width="0.7"/>
<path d="M106.30000000000001 292H137.7M122.19999999999999 276.5V307.3" stroke="#b2b2b2" stroke-width="3.4" fill="none"/>
<circle cx="121.5" cy="288.5" r="5" fill="none" stroke="#e01000" stroke-opacity="0.6" stroke-width="0.7"/>
<text x="128.6" y="307.2" font-family="Liberation Sans, sans-serif" font-size="13.8" fill="#f4c41c">Middle</text>
</g>
</svg>
<svg id="ov" class="abs" style="left:0;top:0" width="1500" height="844" viewBox="0 0 1500 844" font-family="Liberation Sans, sans-serif">
<text x="14.30" y="14.7" font-size="12.9" letter-spacing="-0.361" fill="#161616" stroke="#161616" stroke-width="0.3">File</text>
<text x="47.30" y="14.7" font-size="12.9" letter-spacing="0.158" fill="#161616" stroke="#161616" stroke-width="0.3">Edit</text>
<text x="83.30" y="14.7" font-size="12.9" letter-spacing="-0.020" fill="#161616" stroke="#161616" stroke-width="0.3">View</text>
<text x="124.30" y="14.7" font-size="12.9" letter-spacing="0.230" fill="#161616" stroke="#161616" stroke-width="0.3">Select</text>
<text x="174.30" y="14.7" font-size="12.9" letter-spacing="0.089" fill="#161616" stroke="#161616" stroke-width="0.3">Draw</text>
<text x="217.30" y="14.7" font-size="12.9" letter-spacing="0.133" fill="#161616" stroke="#161616" stroke-width="0.3">Dimension</text>
<text x="292.70" y="14.7" font-size="12.9" letter-spacing="0.462" fill="#161616" stroke="#161616" stroke-width="0.3">Modify</text>
<text x="346.70" y="14.7" font-size="12.9" letter-spacing="-0.174" fill="#161616" stroke="#161616" stroke-width="0.3">Snap</text>
<text x="389.30" y="14.7" font-size="12.9" letter-spacing="0.061" fill="#161616" stroke="#161616" stroke-width="0.3">Info</text>
<text x="424.30" y="14.7" font-size="12.9" letter-spacing="-0.216" fill="#161616" stroke="#161616" stroke-width="0.3">Layer</text>
<text x="469.30" y="14.7" font-size="12.9" letter-spacing="0.458" fill="#161616" stroke="#161616" stroke-width="0.3">Block</text>
<text x="515.70" y="14.7" font-size="12.9" letter-spacing="0.338" fill="#161616" stroke="#161616" stroke-width="0.3">Window</text>
<text x="576.00" y="14.7" font-size="12.9" letter-spacing="0.397" fill="#161616" stroke="#161616" stroke-width="0.3">Misc</text>
<text x="616.30" y="14.7" font-size="12.9" letter-spacing="0.388" fill="#161616" stroke="#161616" stroke-width="0.3">Help</text>
<text x="83.30" y="92.7" font-size="13" letter-spacing="0.059" fill="#1c1c1c" stroke="#1c1c1c" stroke-width="0.3">Rotation:</text>
<text x="269.20" y="92.7" font-size="13" letter-spacing="-0.125" fill="#1c1c1c" stroke="#1c1c1c" stroke-width="0.3">Scale:</text>
<text x="554.90" y="92.7" font-size="13" letter-spacing="0.154" fill="#1c1c1c" stroke="#1c1c1c" stroke-width="0.3">To current layer</text>
<text x="682.60" y="92.7" font-size="13" letter-spacing="0.186" fill="#1c1c1c" stroke="#1c1c1c" stroke-width="0.3">Overwrite layers</text>
<text x="814.60" y="92.7" font-size="13" letter-spacing="0.274" fill="#1c1c1c" stroke="#1c1c1c" stroke-width="0.3">Overwrite blocks</text>
<text x="155.20" y="91.6" font-size="13" letter-spacing="-0.128" fill="#111" stroke="#111" stroke-width="0.3">0</text>
<text x="324.60" y="91.6" font-size="13" letter-spacing="-3.228" fill="#111" stroke="#111" stroke-width="0.3">1</text>
<path d="M78.9 116.1L86.7 123.9M86.7 116.1L78.9 123.9" stroke="#4a4a4a" stroke-width="1" fill="none"/>
<defs><linearGradient id="gq" x1="0" y1="0" x2="1" y2="1"><stop offset="0" stop-color="#6f8cc0"/><stop offset="0.5" stop-color="#26427e"/><stop offset="1" stop-color="#10285e"/></linearGradient></defs><circle cx="101.8" cy="118.2" r="5.4" fill="#f4f4f4" stroke="url(#gq)" stroke-width="2.1"/>
<path d="M99 116.4L104 115.6M100.4 114.6V120.6M98.6 119L103.6 118.4" stroke="#d48a8a" stroke-width="0.5" fill="none"/>
<path d="M101.6 118.2L106.6 123.4" stroke="#f2a72c" stroke-width="2.2" stroke-linecap="butt"/>
<path d="M101 117.6L102.6 119.2" stroke="#f6e7a0" stroke-width="1.6"/>
<path d="M106.2 123L107.6 124.4" stroke="#e4686c" stroke-width="2.2" stroke-linecap="round"/>
<text x="582.90" y="123.7" font-size="12" letter-spacing="-0.035" fill="#1a1a1a" stroke="#1a1a1a" stroke-width="0.3">* bond_washer.dxf</text>
<text x="1118.80" y="745.3" font-size="13" letter-spacing="-0.421" fill="#111" stroke="#111" stroke-width="0.1">1 &lt; 10</text>
<text x="77.30" y="762.0" font-size="13.1" letter-spacing="-0.053" fill="#0a0ae0" stroke="#0a0ae0" stroke-width="0.12" font-style="italic">Command:</text>
<text x="146.00" y="762.0" font-size="13.1" letter-spacing="-0.011" fill="#0a0ae0" stroke="#0a0ae0" stroke-width="0.12">paste</text>
<text x="73.30" y="790" font-size="13.2" letter-spacing="-0.028" fill="#111" stroke="#111" stroke-width="0.3">Position:</text>
<path d="M1153 750.3V770" stroke="#cfcfcf" stroke-width="1"/>
<rect x="1133.4" y="780.2" width="13" height="9.6" fill="#f4f4f4" stroke="#222" stroke-width="0.8"/><rect x="1133" y="779.8" width="13.8" height="2.6" fill="#000"/><rect x="1144.4" y="780.4" width="1" height="1" fill="#ddd"/>
<text transform="translate(2.60 815.4) rotate(0.1)" font-size="9.6" letter-spacing="0.006" fill="#111" stroke="#111" stroke-width="0.15">10,9</text>
<text transform="translate(2.30 836.1) rotate(0.1)" font-size="9.6" letter-spacing="-0.171" fill="#111" stroke="#111" stroke-width="0.15">@0,-1</text>
<path d="M253.2 802.3V841.7" stroke="#f6f6f6" stroke-width="1"/><path d="M254.1 802.3V841.7" stroke="#666" stroke-width="0.9"/>
<text transform="translate(256.60 815.4) rotate(0.1)" font-size="9.6" letter-spacing="0.387" fill="#111" stroke="#111" stroke-width="0.15">13.4536&lt;42°</text>
<text transform="translate(256.00 836.2) rotate(0.1)" font-size="9.6" letter-spacing="-0.042" fill="#111" stroke="#111" stroke-width="0.15">@1&lt;270°</text>
<text transform="translate(662.70 825.3) rotate(0.1)" font-size="9.6" letter-spacing="0.220" fill="#1c1c1c" stroke="#1c1c1c" stroke-width="0.15">Position</text>
<text transform="translate(754.40 825.3) rotate(0.1)" font-size="9.6" letter-spacing="0.003" fill="#1c1c1c" stroke="#1c1c1c" stroke-width="0.15">Cancel</text>
<text transform="translate(949.30 825.3) rotate(0.1)" font-size="9.6" letter-spacing="0.333" fill="#1c1c1c" stroke="#1c1c1c" stroke-width="0.15">No entities selected.</text>
<circle cx="509.3" cy="822" r="3" fill="#c6c6c6"/>
<circle cx="943.3" cy="822" r="3" fill="#c6c6c6"/>
<circle cx="1272.3" cy="822" r="3" fill="#c6c6c6"/>
<rect x="717.4" y="806.4" width="17" height="29" rx="8.3" fill="#fff" stroke="#333" stroke-width="0.9"/><path d="M717.4 819.2Q725.9 817.2 734.4 819.2" stroke="#333" stroke-width="1" fill="none"/><path d="M725.9 806.6V808.6M725.9 816V818.2" stroke="#333" stroke-width="0.9"/><rect x="724.5" y="808.6" width="2.8" height="7.4" rx="1.4" fill="#fff" stroke="#333" stroke-width="0.9"/>
</svg>
</div>
</body></html>
